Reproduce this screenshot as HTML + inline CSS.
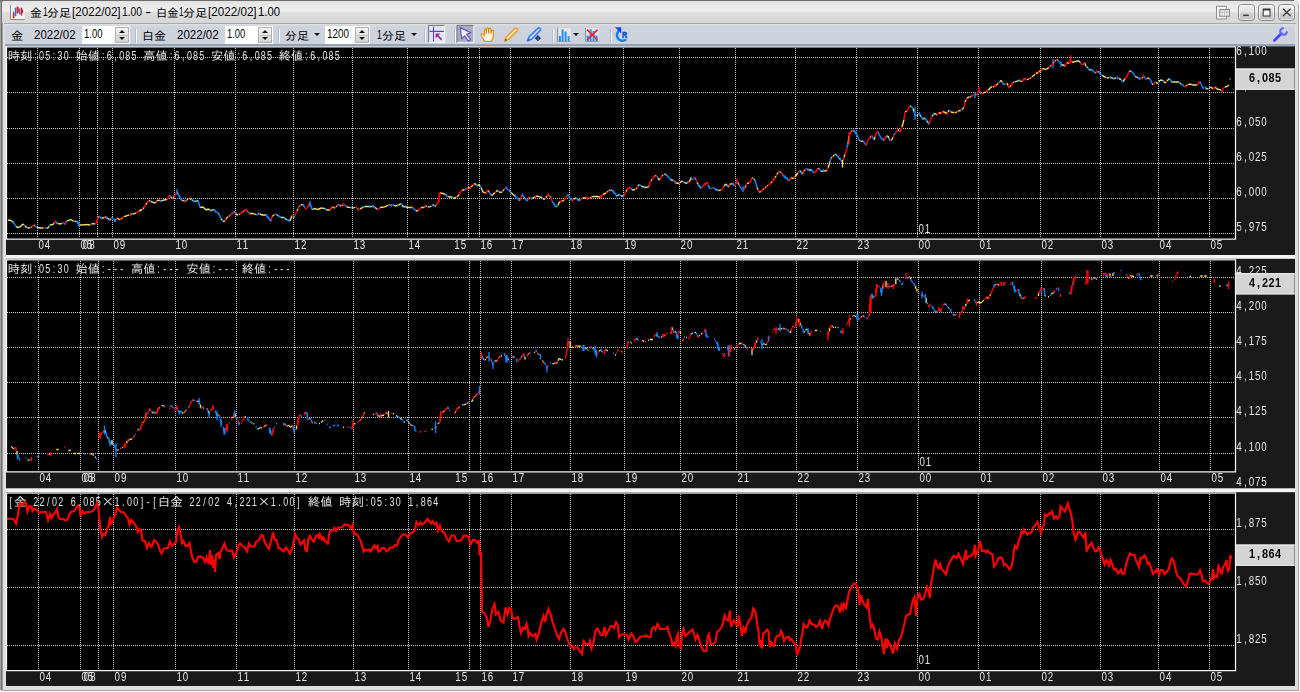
<!DOCTYPE html>
<html lang="ja">
<head>
<meta charset="utf-8">
<title>金1分足[2022/02]1.00 - 白金1分足[2022/02]1.00</title>
<style>
html,body{margin:0;padding:0;background:#fff;overflow:hidden}
body{width:1300px;height:692px;position:relative;font-family:"Liberation Sans","IPAGothic","Noto Sans CJK JP",sans-serif;font-size:11.6px;color:#000}
.abs{position:absolute}
#win{left:0;top:0;width:1299px;height:691px;background:#dedede;border-radius:3px 4px 0 0}
#edgeL{left:0;top:0;width:3px;height:690px;background:linear-gradient(90deg,#a0a0a0 0,#a0a0a0 1.1px,#707070 1.3px,#707070 2.1px,#c8c8c8 2.9px,#d6d6d6 3px)}
#edgeT{left:0;top:0;width:1294px;height:1px;background:#6c6c6c}
#edgeR{left:1298px;top:4px;width:1px;height:687px;background:#a6a6a6}
#edgeB{left:2px;top:690px;width:1297px;height:1px;background:#a6a6a6}
#title{left:2px;top:1px;width:1296px;height:22px;background:linear-gradient(180deg,#e2e2e2 0,#efefef 45%,#dcdcdc 55%,#d6d6d6 100%);border-radius:2px 3px 0 0}
#tline{left:4px;top:22.6px;width:1292px;height:1.9px;background:#a9a9a9}
#tbar{left:5px;top:24.5px;width:1290px;height:19.2px;background:linear-gradient(180deg,#d6dae3 0,#cdd2dc 2px,#cdd2dc 100%)}
#tbar2{left:5px;top:43.6px;width:1290px;height:2.8px;background:#95a1b6}
.t{position:absolute;white-space:pre;line-height:14px;height:14px;transform-origin:0 50%}
.cj{font-family:"IPAGothic","Noto Sans CJK JP",sans-serif}
.inp{position:absolute;background:#fff;height:17.5px;top:26px}
.spin{position:absolute;top:27px;width:13.5px;height:15.5px;background:linear-gradient(180deg,#f4f4f4,#d4d4d4);border:0.5px solid #b0b0b0;box-sizing:border-box}
.spin:before{content:"";position:absolute;left:3px;top:2.2px;border:3.6px solid transparent;border-top:0;border-bottom:3.8px solid #111}
.spin:after{content:"";position:absolute;left:3px;bottom:2px;border:3.6px solid transparent;border-bottom:0;border-top:3.8px solid #111}
.spin i{position:absolute;left:0;right:0;top:7px;height:1px;background:#c0c0c0}
.sep{position:absolute;top:29px;width:1.2px;height:14px;background:#f6f7fa;border-left:1px solid #b4bac6}
.dd{position:absolute;top:33px;border:3.4px solid transparent;border-bottom:0;border-top:3.6px solid #111}
.wb{position:absolute;top:3.5px;width:17px;height:17.6px;border:1px solid #8a8a8a;border-radius:3.5px;box-sizing:border-box;background:linear-gradient(180deg,#f0f0f0 0,#e0e0e0 48%,#cfcfcf 52%,#c2c2c2 100%);box-shadow:inset 0 0 0 1px rgba(255,255,255,.55)}
</style>
</head>
<body>
<div id="win" class="abs"></div>
<div id="edgeL" class="abs"></div>
<div id="edgeT" class="abs"></div>
<div id="edgeR" class="abs"></div>
<div id="edgeB" class="abs"></div>
<div id="title" class="abs"></div>
<div id="tline" class="abs"></div>
<div id="tbar" class="abs"></div>
<div id="tbar2" class="abs"></div>
<svg class="abs" style="left:9px;top:4px" width="17" height="17" viewBox="9 4 17 17">
<rect x="10.5" y="5.5" width="14" height="14" fill="#f1f1f1"/>
<path d="M10.5 5.2V19.5H24.6" stroke="#8c8c8c" stroke-width="1" fill="none"/>
<path d="M13.6 12.5V18" stroke="#ff1010" stroke-width="1.6"/>
<path d="M13.6 11.2V18.6" stroke="#ff1010" stroke-width=".7"/>
<path d="M15.6 7.6V16.2" stroke="#0a7be8" stroke-width="1.5"/>
<path d="M17.4 6.4V13.6M18 7.6V12.6" stroke="#ff1010" stroke-width="1.5"/>
<path d="M19.8 8.6V14.6" stroke="#0a7be8" stroke-width="1.5"/>
<path d="M21.6 7.4V15.6M22.4 9.6V13" stroke="#ff1010" stroke-width="1.4"/>
</svg>
<span class="t cj" style="left:29.80px;top:6.19px;font-size:11.6px;transform:scaleX(1.0264)">金</span>
<span class="t" style="left:42.80px;top:5.42px;font-size:12px;transform:scaleX(0.7178)">1</span>
<span class="t cj" style="left:47.10px;top:6.19px;font-size:11.6px;transform:scaleX(1.0437)">分足</span>
<span class="t" style="left:72.00px;top:5.42px;font-size:12px;transform:scaleX(0.9711)">[2022/02]</span>
<span class="t" style="left:121.80px;top:5.42px;font-size:12px;transform:scaleX(0.8562)">1.00</span>
<span class="t" style="left:145.10px;top:5.42px;font-size:12px;transform:scaleX(1.5500)">-</span>
<span class="t cj" style="left:155.50px;top:6.19px;font-size:11.6px;transform:scaleX(0.9747)">白金</span>
<span class="t" style="left:179.00px;top:5.42px;font-size:12px;transform:scaleX(0.6879)">1</span>
<span class="t cj" style="left:183.20px;top:6.19px;font-size:11.6px;transform:scaleX(1.0480)">分足</span>
<span class="t" style="left:208.20px;top:5.42px;font-size:12px;transform:scaleX(0.9711)">[2022/02]</span>
<span class="t" style="left:257.80px;top:5.42px;font-size:12px;transform:scaleX(0.9418)">1.00</span>
<svg class="abs" style="left:1215px;top:5px" width="16" height="16" viewBox="1215 5 16 16">
<rect x="1216.5" y="6.3" width="9.8" height="12.6" fill="#f6f6f6" stroke="#8e8e8e" stroke-width="1"/>
<rect x="1219.8" y="9.6" width="9.6" height="6.6" fill="#fbfbfb" stroke="#7c7c7c" stroke-width="1"/>
<path d="M1222.2 10V16M1224.6 10V16M1227 10V16M1220 12.4H1229.4" stroke="#b4b4b4" stroke-width=".8"/>
</svg>
<div class="wb" style="left:1238.3px"></div><div class="wb" style="left:1258px"></div><div class="wb" style="left:1278px"></div>
<svg class="abs" style="left:1238px;top:3px" width="60" height="19" viewBox="1238 3 60 19">
<path d="M1243.2 15.3H1248.8" stroke="#3c3c3c" stroke-width="1.5"/>
<rect x="1263.2" y="9.2" width="6.8" height="6.8" fill="#f4f4f4" stroke="#3c3c3c" stroke-width="1.1"/>
<path d="M1263 9.6H1270.2" stroke="#3c3c3c" stroke-width="1.8"/>
<path d="M1283 8.8L1290.6 16M1290.6 8.8L1283 16" stroke="#3c3c3c" stroke-width="1.3"/>
</svg>
<div class="inp" style="left:324.8px;width:45.0px"></div><div class="spin" style="left:355px"><i></i></div>
<div class="inp" style="left:224.6px;width:48.2px"></div><div class="spin" style="left:258px"><i></i></div>
<div class="inp" style="left:82px;width:47.6px"></div><div class="spin" style="left:115px"><i></i></div>
<span class="t cj" style="left:11.10px;top:29.19px;font-size:11.6px;transform:scaleX(1.0609)">金</span>
<span class="t" style="left:34.00px;top:28.37px;font-size:12.4px;transform:scaleX(0.9286)">2022/02</span>
<span class="t" style="left:84.40px;top:27.22px;font-size:12px;transform:scaleX(0.7877)">1.00</span>
<span class="t cj" style="left:142.30px;top:29.19px;font-size:11.6px;transform:scaleX(1.0350)">白金</span>
<span class="t" style="left:176.90px;top:28.37px;font-size:12.4px;transform:scaleX(0.9309)">2022/02</span>
<span class="t" style="left:227.40px;top:27.22px;font-size:12px;transform:scaleX(0.7791)">1.00</span>
<span class="t cj" style="left:284.70px;top:29.19px;font-size:11.6px;transform:scaleX(1.0350)">分足</span>
<span class="t" style="left:327.40px;top:27.22px;font-size:12px;transform:scaleX(0.8239)">1200</span>
<span class="t" style="left:377.00px;top:28.37px;font-size:12.4px;transform:scaleX(0.6950)">1</span>
<span class="t cj" style="left:381.50px;top:29.19px;font-size:11.6px;transform:scaleX(1.0350)">分足</span>
<div class="sep" style="left:135px"></div>
<div class="sep" style="left:277.5px"></div>
<div class="sep" style="left:424.3px"></div>
<div class="sep" style="left:453.7px"></div>
<div class="sep" style="left:551.8px"></div>
<div class="sep" style="left:609.8px"></div>
<div class="dd" style="left:314px"></div>
<div class="dd" style="left:411.2px"></div>
<div class="dd" style="left:573.1px"></div>
<svg class="abs" style="left:426px;top:24px" width="210" height="20" viewBox="426 24 210 20">
<!-- crosshair toggle (pressed) -->
<rect x="428.6" y="25.4" width="16.2" height="17.2" fill="#e3e5ea"/>
<path d="M428.6 42.6V25.4H444.8" stroke="#6f737c" stroke-width="1" fill="none"/>
<path d="M444.8 25.4V42.6H428.6" stroke="#fbfbfd" stroke-width="1" fill="none"/>
<path d="M433.5 26.6V41.6M429.6 31.4H443.8" stroke="#5b45c4" stroke-width="1.1"/>
<path d="M441.6 39.6L437 35" stroke="#9420b4" stroke-width="1.7"/>
<path d="M435.6 33.6H440.2L435.6 38.2Z" fill="#9420b4"/>
<!-- pointer (pressed) -->
<rect x="457" y="25.4" width="16.8" height="17.2" fill="#a9afba"/>
<path d="M457 42.6V25.4H473.8" stroke="#70757f" stroke-width="1" fill="none"/>
<path d="M473.8 25.4V42.6H457" stroke="#f4f5f8" stroke-width="1" fill="none"/>
<path d="M460.2 27.6L470.8 32.6L466.6 34.2L470.6 39.6L468.4 41.2L464.6 35.8L461.8 38.8Z" fill="#f6f2ff" stroke="#6a50d0" stroke-width="1.2" stroke-linejoin="round"/>
<!-- hand -->
<path d="M484.6 41.4L482 36.8C481 35.2 480.8 34 481.6 33.6C482.6 33.2 483.6 34.4 484.6 35.8L484.4 30.2C484.4 28.8 486 28.8 486.1 30.2L486.3 33.5L486.6 28.6C486.7 27.2 488.4 27.2 488.5 28.6L488.6 33.2L489.2 29C489.4 27.8 491 28 491 29.4L490.9 33.6L491.8 31C492.2 29.9 493.6 30.3 493.5 31.6L493.2 36.4C493 38.6 492 40 491.4 41.4Z" fill="#fff5e2" stroke="#d98f1e" stroke-width="1.15" stroke-linejoin="round"/>
<!-- pencil -->
<path d="M504.6 41.2L506.2 37L514.8 28.6C516 27.4 518.4 29 517.4 30.6L508.6 39.4Z" fill="#fde6bc" stroke="#eea030" stroke-width="1.5" stroke-linejoin="round"/>
<path d="M504.4 41.4L505.6 38.2L507.4 40Z" fill="#8a5a20"/>
<!-- marker -->
<path d="M527.4 41L529 36.8L537.8 28.4C539 27.2 541.4 28.8 540.4 30.4L531.6 39.2Z" fill="#c4dcff" stroke="#3f7fe8" stroke-width="1.6" stroke-linejoin="round"/>
<path d="M527.2 41.2L528.4 38.2L530.2 39.8Z" fill="#2a5fc8"/>
<path d="M537.9 35.1L541 38.2L537.9 41.3L534.8 38.2Z" fill="#122f78"/>
<path d="M537.3 36.4V40M538.6 36.4V40" stroke="#6a86c8" stroke-width=".5"/>
<!-- bars -->
<rect x="557.4" y="28" width="13.4" height="13.6" fill="#e6e6e6"/>
<path d="M557.6 28V41.4H570.8" stroke="#8f8f8f" stroke-width="1" fill="none"/>
<path d="M559.8 41V36M562.6 41V29.6M565.6 41V31.6M568.6 41V36.2" stroke="#1e8fff" stroke-width="2"/>
<!-- bars with X -->
<rect x="585.4" y="28" width="13.4" height="13.6" fill="#e6e6e6"/>
<path d="M585.6 28V41.4H598.8" stroke="#8f8f8f" stroke-width="1" fill="none"/>
<path d="M587.8 41V35.4M590.6 41V29.2M593.6 41V31M596.6 41V35.4" stroke="#1e8fff" stroke-width="2"/>
<path d="M587 29.6L597.6 40M597.6 29.6L587 40" stroke="#ff1a2a" stroke-width="1.5"/>
<!-- reload R -->
<path d="M620.4 30A5.6 5.6 0 1 0 626.2 39.4" stroke="#0f86e2" stroke-width="2.5" fill="none"/>
<path d="M615 27.3H621.2V33.4Z" fill="#0f48fa"/>
<text x="621.9" y="37.5" font-family="'Liberation Sans',sans-serif" font-size="9.8" font-weight="bold" fill="#0c52d8" stroke="#0c52d8" stroke-width=".55" textLength="5.2" lengthAdjust="spacingAndGlyphs">R</text>
</svg>
<svg class="abs" style="left:1271px;top:26px" width="18" height="18" viewBox="1271 26 18 18">
<path d="M1274.4 40.4L1281.4 33.6" stroke="#4848f6" stroke-width="2.8" stroke-linecap="round"/>
<path d="M1286.85 31.97A3.3 3.3 0 1 1 1283.03 28.15" stroke="#6464ff" stroke-width="2" fill="none" stroke-linecap="round"/>
</svg>
<svg width="1300" height="692" viewBox="0 0 1300 692" style="position:absolute;left:0;top:0;will-change:transform" shape-rendering="auto">
<rect x="6" y="46.3" width="1289" height="639.7" fill="#f4f4f4"/>
<rect x="6" y="46.3" width="1289" height="208.7" fill="#1a1a1a"/>
<rect x="6.5" y="46.9" width="1229.0" height="192.1" fill="#000"/>
<line x1="7" y1="57.5" x2="1235" y2="57.5" stroke="#c8c8c8" stroke-width="1" stroke-dasharray="1 1"/>
<line x1="7" y1="92.5" x2="1235" y2="92.5" stroke="#c8c8c8" stroke-width="1" stroke-dasharray="1 1"/>
<line x1="7" y1="128.5" x2="1235" y2="128.5" stroke="#c8c8c8" stroke-width="1" stroke-dasharray="1 1"/>
<line x1="7" y1="163.5" x2="1235" y2="163.5" stroke="#c8c8c8" stroke-width="1" stroke-dasharray="1 1"/>
<line x1="7" y1="198.5" x2="1235" y2="198.5" stroke="#c8c8c8" stroke-width="1" stroke-dasharray="1 1"/>
<line x1="7" y1="233.5" x2="1235" y2="233.5" stroke="#c8c8c8" stroke-width="1" stroke-dasharray="1 1"/>
<line x1="37.5" y1="48" x2="37.5" y2="238" stroke="#c8c8c8" stroke-width="1" stroke-dasharray="1 1"/>
<line x1="79.5" y1="48" x2="79.5" y2="238" stroke="#c8c8c8" stroke-width="1" stroke-dasharray="1 1"/>
<line x1="97.5" y1="48" x2="97.5" y2="238" stroke="#c8c8c8" stroke-width="1" stroke-dasharray="1 1"/>
<line x1="112.5" y1="48" x2="112.5" y2="238" stroke="#c8c8c8" stroke-width="1" stroke-dasharray="1 1"/>
<line x1="174.5" y1="48" x2="174.5" y2="238" stroke="#c8c8c8" stroke-width="1" stroke-dasharray="1 1"/>
<line x1="235.5" y1="48" x2="235.5" y2="238" stroke="#c8c8c8" stroke-width="1" stroke-dasharray="1 1"/>
<line x1="293.5" y1="48" x2="293.5" y2="238" stroke="#c8c8c8" stroke-width="1" stroke-dasharray="1 1"/>
<line x1="352.5" y1="48" x2="352.5" y2="238" stroke="#c8c8c8" stroke-width="1" stroke-dasharray="1 1"/>
<line x1="407.5" y1="48" x2="407.5" y2="238" stroke="#c8c8c8" stroke-width="1" stroke-dasharray="1 1"/>
<line x1="468.5" y1="48" x2="468.5" y2="238" stroke="#c8c8c8" stroke-width="1" stroke-dasharray="1 1"/>
<line x1="479.5" y1="48" x2="479.5" y2="238" stroke="#c8c8c8" stroke-width="1" stroke-dasharray="1 1"/>
<line x1="510.5" y1="48" x2="510.5" y2="238" stroke="#c8c8c8" stroke-width="1" stroke-dasharray="1 1"/>
<line x1="569.5" y1="48" x2="569.5" y2="238" stroke="#c8c8c8" stroke-width="1" stroke-dasharray="1 1"/>
<line x1="623.5" y1="48" x2="623.5" y2="238" stroke="#c8c8c8" stroke-width="1" stroke-dasharray="1 1"/>
<line x1="679.5" y1="48" x2="679.5" y2="238" stroke="#c8c8c8" stroke-width="1" stroke-dasharray="1 1"/>
<line x1="735.5" y1="48" x2="735.5" y2="238" stroke="#c8c8c8" stroke-width="1" stroke-dasharray="1 1"/>
<line x1="795.5" y1="48" x2="795.5" y2="238" stroke="#c8c8c8" stroke-width="1" stroke-dasharray="1 1"/>
<line x1="856.5" y1="48" x2="856.5" y2="238" stroke="#c8c8c8" stroke-width="1" stroke-dasharray="1 1"/>
<line x1="917.5" y1="48" x2="917.5" y2="238" stroke="#c8c8c8" stroke-width="1" stroke-dasharray="1 1"/>
<line x1="978.5" y1="48" x2="978.5" y2="238" stroke="#c8c8c8" stroke-width="1" stroke-dasharray="1 1"/>
<line x1="1040.5" y1="48" x2="1040.5" y2="238" stroke="#c8c8c8" stroke-width="1" stroke-dasharray="1 1"/>
<line x1="1100.5" y1="48" x2="1100.5" y2="238" stroke="#c8c8c8" stroke-width="1" stroke-dasharray="1 1"/>
<line x1="1158.5" y1="48" x2="1158.5" y2="238" stroke="#c8c8c8" stroke-width="1" stroke-dasharray="1 1"/>
<line x1="1209.5" y1="48" x2="1209.5" y2="238" stroke="#c8c8c8" stroke-width="1" stroke-dasharray="1 1"/>
<text x="7.70" y="59.90" fill="#e4e4e4" font-family="'IPAGothic','Noto Sans CJK JP',sans-serif" font-size="11.8" textLength="24.64" lengthAdjust="spacingAndGlyphs">時刻</text>
<text transform="scale(0.68,1)" x="52.09 61.15 70.21 79.26 88.32 97.38" y="59.70" fill="#e4e4e4" text-anchor="middle" font-family="'Liberation Sans',sans-serif" font-size="13.2">:05:30</text>
<text x="75.46" y="59.90" fill="#e4e4e4" font-family="'IPAGothic','Noto Sans CJK JP',sans-serif" font-size="11.8" textLength="24.64" lengthAdjust="spacingAndGlyphs">始値</text>
<text transform="scale(0.68,1)" x="151.74 160.79 169.85 178.91 187.97 197.03" y="59.70" fill="#e4e4e4" text-anchor="middle" font-family="'Liberation Sans',sans-serif" font-size="13.2">:6,085</text>
<text x="143.22" y="59.90" fill="#e4e4e4" font-family="'IPAGothic','Noto Sans CJK JP',sans-serif" font-size="11.8" textLength="24.64" lengthAdjust="spacingAndGlyphs">高値</text>
<text transform="scale(0.68,1)" x="251.38 260.44 269.50 278.56 287.62 296.68" y="59.70" fill="#e4e4e4" text-anchor="middle" font-family="'Liberation Sans',sans-serif" font-size="13.2">:6,085</text>
<text x="210.98" y="59.90" fill="#e4e4e4" font-family="'IPAGothic','Noto Sans CJK JP',sans-serif" font-size="11.8" textLength="24.64" lengthAdjust="spacingAndGlyphs">安値</text>
<text transform="scale(0.68,1)" x="351.03 360.09 369.15 378.21 387.26 396.32" y="59.70" fill="#e4e4e4" text-anchor="middle" font-family="'Liberation Sans',sans-serif" font-size="13.2">:6,085</text>
<text x="278.74" y="59.90" fill="#e4e4e4" font-family="'IPAGothic','Noto Sans CJK JP',sans-serif" font-size="11.8" textLength="24.64" lengthAdjust="spacingAndGlyphs">終値</text>
<text transform="scale(0.68,1)" x="450.68 459.74 468.79 477.85 486.91 495.97" y="59.70" fill="#e4e4e4" text-anchor="middle" font-family="'Liberation Sans',sans-serif" font-size="13.2">:6,085</text>
<path d="M8.0 220.0L9.0 220.2M9.0 220.2L10.0 220.3M10.0 220.3L11.0 220.5M11.0 220.5L12.0 221.3M12.0 221.3L13.0 222.2M16.0 226.5L17.0 227.0M17.0 227.0L18.0 227.5M18.0 227.5L19.0 227.2M19.0 227.2L20.0 227.0M20.0 227.0L21.0 226.0M21.0 226.0L22.0 225.0M22.0 225.0L23.0 224.0M23.0 224.0L24.0 225.0M25.0 226.0L26.0 227.0M26.0 227.0L27.0 227.5M28.0 228.0L29.0 227.8M29.0 227.8L30.0 227.7M31.0 227.5L32.0 226.7M34.0 225.0L35.0 225.8M37.0 227.5L38.0 227.7M38.0 227.7L39.0 227.8M39.0 227.8L40.0 228.0M40.0 228.0L41.1 228.0M41.1 228.0L42.3 228.0M42.3 228.0L43.4 228.0M46.9 228.0L48.0 228.0M48.0 228.0L49.0 226.5M50.0 225.0L51.0 224.8M51.0 224.8L52.0 224.7M52.0 224.7L53.0 224.5M53.0 224.5L54.0 223.0M58.0 223.5L59.0 223.7M59.0 223.7L60.0 223.8M60.0 223.8L61.0 224.0M61.0 224.0L62.0 223.2M67.0 221.0L68.0 220.6M68.0 220.6L69.0 220.2M69.0 220.2L70.0 219.9M70.0 219.9L71.0 219.5M71.0 219.5L72.0 220.2M72.0 220.2L73.0 221.0M73.0 221.0L74.0 221.1M75.0 221.2L76.0 221.4M76.0 221.4L77.0 221.5M79.0 225.0L80.0 225.0M80.0 225.0L81.0 225.0M81.0 225.0L82.0 225.0M82.0 225.0L83.0 224.9M83.0 224.9L84.0 224.8M84.0 224.8L85.0 224.7M85.0 224.7L86.0 224.6M86.0 224.6L87.0 224.5M87.0 224.5L88.0 224.7M88.0 224.7L89.0 224.8M89.0 224.8L90.0 225.0M92.0 223.5L93.0 223.7M93.0 223.7L94.0 223.8M94.0 223.8L95.0 224.0M98.0 217.5L99.0 217.0M102.0 218.5L103.0 218.0M103.0 218.0L104.0 217.5M105.0 217.0L106.0 217.5M107.0 218.0L108.0 218.7M108.0 218.7L109.0 219.3M110.0 220.0L111.0 218.8M117.0 218.0L118.0 218.7M118.0 218.7L119.0 219.3M119.0 219.3L120.0 220.0M121.0 219.0L122.0 218.0M124.0 216.7L125.0 216.3M125.0 216.3L126.0 216.0M126.0 216.0L127.0 215.7M127.0 215.7L128.0 215.3M128.0 215.3L129.0 215.0M131.0 214.3L132.0 214.0M133.0 213.8L134.0 213.7M134.0 213.7L135.0 213.5M135.0 213.5L136.0 212.8M139.0 211.0L140.0 210.5M140.0 210.5L141.0 210.0M141.0 210.0L142.0 209.5M143.0 209.0L144.0 207.5M146.0 204.5L147.0 203.0M149.0 200.5L150.0 201.0M151.0 201.5L152.0 202.0M152.0 202.0L153.0 202.3M153.0 202.3L154.0 202.7M154.0 202.7L155.0 203.0M155.0 203.0L156.0 202.0M157.0 201.0L158.0 200.0M158.0 200.0L159.0 200.3M159.0 200.3L160.0 200.7M161.0 201.0L162.0 200.7M162.0 200.7L163.0 200.3M163.0 200.3L164.0 200.0M164.0 200.0L165.0 199.8M165.0 199.8L166.0 199.7M166.0 199.7L167.0 199.5M171.0 196.8L172.0 198.5M173.0 197.5L174.0 196.5M177.0 191.5L178.0 193.8M182.0 200.5L183.0 200.6M183.0 200.6L184.0 200.8M185.0 200.9L186.0 201.0M187.0 200.0L188.0 199.0M189.0 198.0L190.0 198.7M190.0 198.7L191.0 199.3M192.0 200.0L193.0 200.5M195.0 201.5L196.0 201.2M196.0 201.2L197.0 200.8M197.0 200.8L198.0 200.5M200.0 207.5L201.0 207.3M201.0 207.3L202.0 207.2M202.0 207.2L203.0 207.0M203.0 207.0L204.0 208.0M204.0 208.0L205.0 209.0M205.0 209.0L206.0 210.0M206.0 210.0L207.0 209.5M207.0 209.5L208.0 209.0M208.0 209.0L209.0 209.5M209.0 209.5L210.0 210.0M211.0 210.5L212.0 210.2M212.0 210.2L213.0 209.8M213.0 209.8L214.0 209.5M218.0 213.2L219.0 214.0M221.0 218.5L222.0 220.0M223.0 221.5L224.0 221.2M224.0 221.2L225.0 221.0M226.0 219.2L227.0 217.5M227.0 217.5L228.0 216.8M229.0 216.2L230.0 215.5M234.0 212.2L235.0 212.0M236.0 213.5L237.0 215.0M237.0 215.0L238.0 214.7M239.0 214.3L240.0 214.0M243.0 211.5L244.0 210.8M250.0 213.5L251.0 213.5M251.0 213.5L252.0 213.5M252.0 213.5L253.0 213.5M253.0 213.5L254.0 213.9M254.0 213.9L255.0 214.2M255.0 214.2L256.0 214.6M258.0 214.2L259.0 213.5M260.0 214.0L261.0 214.5M261.0 214.5L262.0 215.0M262.0 215.0L263.0 215.0M263.0 215.0L264.0 215.0M264.0 215.0L265.0 215.0M265.0 215.0L266.0 215.0M272.0 216.5L273.0 215.7M273.0 215.7L274.0 214.8M277.0 215.0L278.0 215.5M281.0 217.5L282.0 217.5M282.0 217.5L283.0 217.5M283.0 217.5L284.0 217.5M285.0 218.3L286.0 219.2M286.0 219.2L287.0 220.0M288.0 220.3L289.0 220.7M290.0 221.0L291.0 218.2M291.0 218.2L292.0 215.5M293.0 216.5L294.0 217.5M297.0 210.8L298.0 208.7M299.0 206.5L300.0 205.8M301.0 205.0L302.0 204.8M302.0 204.8L303.0 204.5M309.0 204.5L310.0 203.0M312.0 209.5L313.0 209.2M313.0 209.2L314.0 208.8M314.0 208.8L315.0 208.5M315.0 208.5L316.0 208.8M316.0 208.8L317.0 209.2M317.0 209.2L318.0 209.5M318.0 209.5L319.0 209.0M319.0 209.0L320.0 208.5M320.0 208.5L321.0 208.0M321.0 208.0L322.0 208.1M322.0 208.1L323.0 208.2M323.0 208.2L324.0 208.4M324.0 208.4L325.0 208.5M326.0 209.2L327.0 210.0M327.0 210.0L328.0 210.0M328.0 210.0L329.0 210.0M329.0 210.0L330.0 210.0M332.0 207.0L333.0 207.3M333.0 207.3L334.0 207.7M334.0 207.7L335.0 208.0M336.0 206.8L337.0 205.7M340.0 205.5L341.0 206.0M342.0 205.5L343.0 205.0M347.0 207.0L348.2 207.2M348.2 207.2L349.4 207.4M349.4 207.4L350.6 207.6M351.8 207.8L353.0 208.0M353.0 208.0L354.0 207.7M354.0 207.7L355.0 207.3M360.0 208.8L361.0 208.5M361.0 208.5L362.0 207.8M362.0 207.8L363.0 207.2M365.0 206.5L366.0 206.5M366.0 206.5L367.0 206.5M367.0 206.5L368.0 206.5M368.0 206.5L369.0 206.5M370.0 206.5L371.0 206.5M371.0 206.5L372.0 206.5M373.0 206.5L374.0 206.5M375.0 207.4L376.0 208.2M376.0 208.2L377.0 209.1M380.0 207.5L381.0 207.4M381.0 207.4L382.0 207.2M382.0 207.2L383.0 207.1M383.0 207.1L384.0 207.0M384.0 207.0L385.0 206.7M385.0 206.7L386.0 206.3M386.0 206.3L387.0 206.0M387.0 206.0L388.0 205.2M389.0 204.5L390.0 205.2M394.0 205.2L395.0 206.0M395.0 206.0L396.0 205.8M396.0 205.8L397.0 205.7M398.0 205.5L399.0 204.8M399.0 204.8L400.0 204.2M400.0 204.2L401.0 203.5M402.0 205.0L403.0 206.5M403.0 206.5L404.0 206.7M404.0 206.7L405.0 206.8M406.0 207.0L407.0 207.2M407.0 207.2L408.0 207.3M408.0 207.3L409.0 207.5M409.0 207.5L410.0 207.5M410.0 207.5L411.0 207.5M411.0 207.5L412.0 207.5M416.0 210.5L417.0 211.0M417.0 211.0L418.0 210.5M421.0 207.5L422.0 207.5M422.0 207.5L423.0 207.5M423.0 207.5L424.0 207.5M426.0 206.0L427.0 206.3M428.0 206.7L429.0 207.0M429.0 207.0L430.0 206.7M430.0 206.7L431.0 206.3M433.0 204.5L434.0 205.5M435.0 206.5L436.0 205.2M440.0 193.0L441.0 193.2M441.0 193.2L442.0 193.3M442.0 193.3L443.0 193.5M443.0 193.5L444.0 194.0M444.0 194.0L445.0 194.5M448.0 196.3L449.0 197.0M449.0 197.0L450.0 197.0M450.0 197.0L451.0 197.0M451.0 197.0L452.0 197.0M453.0 197.8L454.0 198.5M454.0 198.5L455.0 198.0M455.0 198.0L456.0 197.5M457.0 196.8L458.0 196.0M458.0 196.0L459.0 194.5M462.0 190.0L463.0 190.0M463.0 190.0L464.0 190.0M468.0 187.5L469.0 187.8M469.0 187.8L470.0 188.0M471.0 187.0L472.0 186.0M472.0 186.0L473.0 185.2M474.0 184.3L475.0 183.5M475.0 183.5L476.0 184.8M477.0 186.0L478.0 185.2M478.0 185.2L479.0 184.5M479.0 184.5L480.0 186.0M481.0 187.5L482.0 189.8M482.0 189.8L483.0 192.0M483.0 192.0L484.0 192.3M484.0 192.3L485.0 192.7M485.0 192.7L486.0 193.0M488.0 190.0L489.0 192.0M491.0 194.8L492.0 195.5M492.0 195.5L493.0 194.5M493.0 194.5L494.0 193.5M494.0 193.5L495.0 192.5M496.0 191.5L497.0 191.0M497.0 191.0L498.0 190.5M499.0 191.5L500.0 192.5M500.0 192.5L501.0 192.2M501.0 192.2L502.0 192.0M503.0 190.8L504.0 189.5M511.0 192.5L512.0 193.5M512.0 193.5L513.0 194.5M513.0 194.5L514.0 195.3M514.0 195.3L515.0 196.2M519.0 199.8L520.0 200.5M524.0 197.5L525.0 198.5M529.0 198.0L530.0 198.2M532.0 198.2L533.0 197.8M533.0 197.8L534.0 197.5M534.0 197.5L535.0 197.0M536.0 196.5L537.0 196.0M537.0 196.0L538.0 196.3M538.0 196.3L539.0 196.7M539.0 196.7L540.0 197.0M540.0 197.0L541.0 197.2M541.0 197.2L542.0 197.5M543.0 198.5L544.0 199.5M544.0 199.5L545.0 198.5M546.0 197.5L547.0 196.0M550.0 196.5L551.0 197.5M556.0 207.0L557.0 206.2M558.0 205.5L559.0 202.5M559.0 202.5L560.0 202.0M562.0 201.0L563.0 200.8M563.0 200.8L564.0 200.5M574.0 199.0L575.0 198.5M575.0 198.5L576.0 198.0M578.0 199.5L579.0 200.0M583.0 198.0L584.0 198.0M584.0 198.0L585.0 198.0M585.0 198.0L586.0 198.0M588.0 198.3L589.0 198.5M590.0 198.0L591.0 197.5M592.0 197.0L593.0 196.5M593.0 196.5L594.0 196.5M594.0 196.5L595.0 196.5M595.0 196.5L596.0 196.5M596.0 196.5L597.0 196.5M597.0 196.5L598.0 196.7M598.0 196.7L599.0 196.8M599.0 196.8L600.0 197.0M603.0 194.5L604.0 194.0M604.0 194.0L605.0 193.5M605.0 193.5L606.0 193.0M607.0 192.2L608.0 191.3M609.0 190.5L610.0 190.3M611.0 190.2L612.0 190.0M617.0 196.0L618.0 195.2M618.0 195.2L619.0 194.5M621.0 196.0L622.0 196.0M622.0 196.0L623.0 196.0M626.0 191.5L627.0 190.0M632.0 190.0L633.0 189.8M633.0 189.8L634.0 189.7M634.0 189.7L635.0 189.5M636.0 188.8L637.0 188.0M638.0 186.2L639.0 184.5M641.0 185.8L642.0 186.5M642.0 186.5L643.0 186.8M643.0 186.8L644.0 187.0M645.0 187.2L646.0 187.5M646.0 187.5L647.0 187.2M647.0 187.2L648.0 186.8M648.0 186.8L649.0 186.5M651.0 180.8L652.0 179.5M655.0 175.5L656.0 175.8M658.0 178.0L659.0 180.0M659.0 180.0L660.0 178.7M662.0 176.0L663.0 175.3M664.0 174.7L665.0 174.0M666.0 174.8L667.0 175.5M671.0 179.5L672.0 180.0M672.0 180.0L673.0 180.5M676.0 183.0L677.0 183.2M677.0 183.2L678.0 183.3M678.0 183.3L679.0 183.5M680.0 182.7L681.0 181.8M681.0 181.8L682.0 181.0M682.0 181.0L683.0 181.7M684.0 182.3L685.0 183.0M685.0 183.0L686.0 183.0M686.0 183.0L687.0 183.0M689.0 181.8L690.0 180.5M690.0 180.5L691.0 177.5M697.0 182.5L698.0 184.2M699.0 186.0L700.0 186.7M716.0 189.5L717.0 189.8M718.0 190.2L719.0 190.5M719.0 190.5L720.0 190.2M720.0 190.2L721.0 189.8M724.0 186.0L725.0 185.0M725.0 185.0L726.0 184.0M726.0 184.0L727.0 185.5M728.0 187.0L729.0 185.8M730.0 184.5L731.0 184.0M731.0 184.0L732.0 183.5M738.0 182.7L739.0 184.8M745.0 187.5L746.0 185.5M747.0 183.5L748.0 183.2M748.0 183.2L749.0 183.0M752.0 177.5L753.0 178.3M754.0 179.2L755.0 180.0M757.0 187.5L758.0 189.8M759.0 192.0L760.0 191.8M760.0 191.8L761.0 191.5M763.0 189.5L764.0 188.5M765.0 187.7L766.0 186.8M767.0 186.0L768.0 185.3M771.0 182.8L772.0 181.7M775.0 177.5L776.0 176.0M777.0 174.3L778.0 172.7M780.0 171.8L781.0 172.7M791.0 178.0L792.0 178.2M792.0 178.2L793.0 178.3M793.0 178.3L794.0 178.5M795.0 177.0L796.0 175.5M796.0 175.5L797.0 174.0M797.0 174.0L798.0 172.8M800.0 170.5L801.0 172.2M802.0 174.0L803.0 172.5M804.0 171.0L805.0 169.8M809.0 170.5L810.0 170.0M810.0 170.0L811.0 169.5M818.0 169.0L819.0 168.0M821.0 171.5L822.0 171.3M822.0 171.3L823.0 171.2M824.0 171.0L825.0 170.8M825.0 170.8L826.0 170.7M826.0 170.7L827.0 170.5M828.0 167.8L829.0 165.0M829.0 165.0L830.0 161.5M831.0 158.0L832.0 157.2M833.0 156.5L834.0 155.2M835.0 154.0L836.0 154.8M836.0 154.8L837.0 155.5M839.0 158.5L840.0 159.2M844.0 157.0L845.0 154.5M848.0 144.0L849.0 136.0M851.0 131.5L852.0 130.8M859.0 140.0L860.0 140.8M861.0 141.5L862.0 141.2M862.0 141.2L863.0 141.0M870.0 137.5L871.0 136.5M874.0 140.0L875.0 136.8M883.0 139.5L884.0 140.0M887.0 136.5L888.0 136.0M888.0 136.0L889.0 138.5M891.0 140.2L892.0 139.5M892.0 139.5L893.0 137.2M898.0 129.5L899.0 130.8M902.0 127.0L903.0 123.2M903.0 123.2L904.0 119.5M905.0 111.5L906.0 111.5M906.0 111.5L907.0 111.5M910.0 106.5L911.0 106.0M913.0 108.5L914.0 111.8M915.0 115.0L916.0 115.5M917.0 116.0L918.0 114.5M920.0 114.8L921.0 116.5M923.0 119.0L924.0 118.5M924.0 118.5L925.0 118.0M927.0 121.0L928.0 122.5M932.0 116.5L933.0 114.5M934.0 114.0L935.0 113.5M935.0 113.5L936.0 114.2M936.0 114.2L937.0 115.0M939.0 112.5L940.0 113.0M940.0 113.0L941.0 113.5M943.0 111.5L944.0 112.0M944.0 112.0L945.0 112.5M945.0 112.5L946.0 113.0M946.0 113.0L947.0 113.5M948.0 111.8L949.0 110.0M951.0 112.0L952.0 112.2M952.0 112.2L953.0 112.5M953.0 112.5L954.0 112.5M955.0 112.5L956.0 112.5M956.0 112.5L957.0 111.8M958.0 111.0L959.0 110.8M959.0 110.8L960.0 110.5M962.0 109.5L963.0 108.5M963.0 108.5L964.0 107.5M965.0 102.0L966.0 100.0M967.0 98.0L968.0 97.5M968.0 97.5L969.0 97.0M970.0 96.8L971.0 96.5M975.0 94.0L976.0 94.5M983.0 93.0L984.0 92.7M984.0 92.7L985.0 92.3M985.0 92.3L986.0 92.0M988.0 90.3L989.0 89.5M989.0 89.5L990.0 88.2M990.0 88.2L991.0 87.0M991.0 87.0L992.0 86.8M993.0 86.7L994.0 86.5M996.0 85.2L997.0 84.5M997.0 84.5L998.0 83.5M1000.0 81.5L1001.0 80.5M1001.0 80.5L1002.0 82.0M1007.0 83.0L1008.0 85.5M1010.0 86.8L1011.0 85.5M1013.0 82.5L1014.0 82.2M1015.0 81.8L1016.0 81.5M1016.0 81.5L1017.0 81.2M1017.0 81.2L1018.0 80.8M1018.0 80.8L1019.0 80.5M1020.0 80.8L1021.0 81.2M1021.0 81.2L1022.0 81.5M1027.0 79.5L1028.0 79.2M1028.0 79.2L1029.0 78.8M1030.0 78.5L1031.0 77.7M1032.0 76.8L1033.0 76.0M1033.0 76.0L1034.0 75.2M1034.0 75.2L1035.0 74.3M1036.0 73.5L1037.0 73.0M1037.0 73.0L1038.0 72.5M1039.0 72.0L1040.0 71.0M1040.0 71.0L1041.0 70.2M1042.0 69.3L1043.0 68.5M1043.0 68.5L1044.0 68.8M1044.0 68.8L1045.0 69.2M1045.0 69.2L1046.0 69.5M1046.0 69.5L1047.0 68.8M1047.0 68.8L1048.0 68.2M1048.0 68.2L1049.0 67.5M1050.0 66.5L1051.0 65.5M1053.0 63.5L1054.0 62.2M1055.0 61.0L1056.0 60.2M1057.0 59.5L1058.0 60.5M1061.0 64.5L1062.0 64.8M1062.0 64.8L1063.0 65.0M1063.0 65.0L1064.0 65.5M1064.0 65.5L1065.0 66.0M1067.0 62.5L1068.0 63.0M1068.0 63.0L1069.0 63.5M1072.0 62.0L1073.0 62.0M1073.0 62.0L1074.0 62.0M1074.0 62.0L1075.0 61.7M1075.0 61.7L1076.0 61.3M1076.0 61.3L1077.0 61.0M1077.0 61.0L1078.0 61.0M1078.0 61.0L1079.0 61.0M1079.0 61.0L1080.0 62.2M1084.5 62.5L1086.0 66.0M1087.0 67.0L1088.0 68.0M1089.0 70.0L1090.0 69.8M1090.0 69.8L1091.0 69.5M1095.0 73.0L1096.0 72.2M1098.0 71.8L1099.0 72.0M1102.0 75.2L1103.0 76.0M1103.0 76.0L1104.0 76.5M1104.0 76.5L1105.0 77.0M1105.0 77.0L1106.0 77.3M1107.0 77.7L1108.0 78.0M1108.0 78.0L1109.0 77.5M1111.0 77.5L1112.0 78.0M1112.0 78.0L1113.0 78.2M1114.0 78.3L1115.0 78.5M1115.0 78.5L1116.0 77.8M1119.0 78.5L1120.0 79.0M1120.0 79.0L1121.0 79.5M1123.0 82.0L1124.0 80.2M1124.0 80.2L1125.0 78.5M1129.0 71.5L1130.0 71.2M1130.0 71.2L1131.0 71.0M1135.0 76.5L1136.0 76.8M1136.0 76.8L1137.0 77.2M1137.0 77.2L1138.0 77.5M1142.0 78.0L1143.0 77.0M1147.0 78.8L1148.0 78.0M1148.0 78.0L1149.0 78.5M1152.0 83.5L1153.5 85.0M1156.0 82.5L1157.0 83.0M1157.0 83.0L1158.0 83.5M1159.0 81.8L1160.0 80.0M1160.0 80.0L1161.0 80.2M1161.0 80.2L1162.0 80.3M1162.0 80.3L1163.0 80.5M1164.0 81.8L1165.0 83.0M1165.0 83.0L1166.0 82.0M1167.0 81.0L1168.2 79.8M1168.2 79.8L1169.5 78.5M1172.0 82.0L1173.0 82.0M1173.0 82.0L1174.0 82.0M1174.0 82.0L1175.0 82.0M1175.0 82.0L1176.0 82.0M1176.0 82.0L1177.0 82.0M1177.0 82.0L1178.0 82.0M1178.0 82.0L1179.0 82.0M1180.0 83.0L1181.0 84.0M1186.0 86.0L1187.0 85.0M1188.0 84.7L1189.0 84.3M1189.0 84.3L1190.0 84.0M1190.0 84.0L1191.0 84.3M1191.0 84.3L1192.0 84.7M1192.0 84.7L1193.0 85.0M1193.0 85.0L1194.0 85.0M1194.0 85.0L1195.0 85.0M1195.0 85.0L1196.0 85.0M1196.0 85.0L1197.0 85.0M1206.0 88.0L1207.0 89.0M1207.0 89.0L1208.0 88.8M1209.0 88.5L1210.0 87.8M1210.0 87.8L1211.0 87.0M1211.0 87.0L1212.0 88.0M1212.0 88.0L1213.0 89.0M1215.0 87.0L1216.0 88.0M1216.0 88.0L1217.0 89.0M1217.0 89.0L1218.0 89.2M1218.0 89.2L1219.0 89.5M1219.0 89.5L1220.0 89.8M1220.0 89.8L1221.0 90.0M1225.0 87.0L1226.0 86.8M1226.0 86.8L1227.0 86.5M1227.0 86.5L1228.0 85.8M1228.0 85.8L1229.0 85.0" stroke="#f0e264" stroke-width="1.4" fill="none" stroke-linecap="butt"/>
<path d="M13.0 222.2L14.0 223.0M14.0 223.0L15.0 224.8M15.0 224.8L16.0 226.5M24.0 225.0L25.0 226.0M27.0 227.5L28.0 228.0M35.0 225.8L36.0 226.7M36.0 226.7L37.0 227.5M44.6 228.0L45.7 228.0M45.7 228.0L46.9 228.0M49.0 226.5L50.0 225.0M56.0 222.2L57.0 222.8M57.0 222.8L58.0 223.5M62.0 223.2L63.0 222.5M64.0 223.2L65.0 224.0M66.0 222.5L67.0 221.0M74.0 221.1L75.0 221.2M77.0 221.5L78.0 223.2M78.0 223.2L79.0 225.0M91.0 224.2L92.0 223.5M100.0 216.5L101.0 217.5M101.0 217.5L102.0 218.5M106.0 217.5L107.0 218.0M109.0 219.3L110.0 220.0M112.0 217.5L113.0 218.5M113.0 218.5L114.0 219.5M114.0 219.5L115.0 220.5M115.0 220.5L116.0 219.2M132.0 214.0L133.0 213.8M150.0 201.0L151.0 201.5M160.0 200.7L161.0 201.0M170.0 195.0L171.0 196.8M178.0 193.8L179.0 196.0M179.0 196.0L180.0 197.5M180.0 197.5L181.0 199.0M181.0 199.0L182.0 200.5M186.0 201.0L187.0 200.0M191.0 199.3L192.0 200.0M193.0 200.5L194.0 201.0M194.0 201.0L195.0 201.5M198.0 200.5L199.0 204.0M199.0 204.0L200.0 207.5M210.0 210.0L211.0 210.5M214.0 209.5L215.0 210.5M215.0 210.5L216.0 211.5M216.0 211.5L217.0 212.3M217.0 212.3L218.0 213.2M219.0 214.0L220.0 216.2M220.0 216.2L221.0 218.5M222.0 220.0L223.0 221.5M231.0 214.5L232.0 213.5M233.0 212.5L234.0 212.2M235.0 212.0L236.0 213.5M247.0 210.8L248.0 212.2M248.0 212.2L249.0 213.5M256.0 214.6L257.0 215.0M257.0 215.0L258.0 214.2M259.0 213.5L260.0 214.0M266.0 215.0L267.0 216.2M267.0 216.2L268.0 217.3M268.0 217.3L269.0 218.5M269.0 218.5L270.0 220.0M270.0 220.0L271.0 221.5M275.0 214.0L276.0 214.5M276.0 214.5L277.0 215.0M278.0 215.5L279.0 216.2M279.0 216.2L280.0 216.8M280.0 216.8L281.0 217.5M284.0 217.5L285.0 218.3M287.0 220.0L288.0 220.3M289.0 220.7L290.0 221.0M294.0 217.5L295.0 215.2M303.0 204.5L304.0 206.2M304.0 206.2L305.0 207.8M310.0 203.0L311.0 206.2M311.0 206.2L312.0 209.5M325.0 208.5L326.0 209.2M338.0 204.5L339.0 205.0M339.0 205.0L340.0 205.5M345.0 205.3L346.0 206.2M346.0 206.2L347.0 207.0M350.6 207.6L351.8 207.8M357.0 208.2L358.0 209.5M363.0 207.2L364.0 206.5M364.0 206.5L365.0 206.5M369.0 206.5L370.0 206.5M372.0 206.5L373.0 206.5M374.0 206.5L375.0 207.4M377.0 209.1L378.0 210.0M390.0 205.2L391.0 206.0M391.0 206.0L392.0 205.2M393.0 204.5L394.0 205.2M397.0 205.7L398.0 205.5M401.0 203.5L402.0 205.0M405.0 206.8L406.0 207.0M413.0 207.5L414.0 208.8M414.0 208.8L415.0 210.0M415.0 210.0L416.0 210.5M424.0 207.5L425.0 206.8M431.0 206.3L432.0 206.0M432.0 206.0L433.0 204.5M434.0 205.5L435.0 206.5M445.0 194.5L446.0 195.0M446.0 195.0L447.0 195.7M452.0 197.0L453.0 197.8M464.0 190.0L465.0 190.0M465.0 190.0L466.0 189.2M476.0 184.8L477.0 186.0M480.0 186.0L481.0 187.5M489.0 192.0L490.0 194.0M490.0 194.0L491.0 194.8M498.0 190.5L499.0 191.5M504.0 189.5L505.0 188.5M506.0 187.5L507.0 188.8M507.0 188.8L508.0 190.0M509.0 190.8L510.0 191.5M510.0 191.5L511.0 192.5M515.0 196.2L516.0 197.0M516.0 197.0L517.0 198.0M517.0 198.0L518.0 199.0M518.0 199.0L519.0 199.8M522.0 194.5L523.0 196.0M523.0 196.0L524.0 197.5M525.0 198.5L526.0 199.5M526.0 199.5L527.0 201.0M527.0 201.0L528.0 199.5M530.0 198.2L531.0 198.5M531.0 198.5L532.0 198.2M542.0 197.5L543.0 198.5M549.0 195.5L550.0 196.5M552.0 201.0L553.0 202.5M553.0 202.5L554.0 204.0M554.0 204.0L555.0 205.5M555.0 205.5L556.0 207.0M557.0 206.2L558.0 205.5M567.0 196.0L568.0 194.5M568.0 194.5L569.0 196.5M569.0 196.5L570.0 198.5M570.0 198.5L571.0 199.5M571.0 199.5L572.0 200.5M576.0 198.0L577.0 198.8M577.0 198.8L578.0 199.5M579.0 200.0L580.0 200.5M582.0 198.0L583.0 198.0M610.0 190.3L611.0 190.2M612.0 190.0L613.0 191.2M613.0 191.2L614.0 192.3M614.0 192.3L615.0 193.5M615.0 193.5L616.0 194.8M616.0 194.8L617.0 196.0M619.0 194.5L620.0 195.2M620.0 195.2L621.0 196.0M623.0 196.0L624.0 196.0M630.0 187.5L631.0 188.8M631.0 188.8L632.0 190.0M639.0 184.5L640.0 185.2M640.0 185.2L641.0 185.8M644.0 187.0L645.0 187.2M657.0 176.0L658.0 178.0M665.0 174.0L666.0 174.8M667.0 175.5L668.0 176.7M668.0 176.7L669.0 177.8M669.0 177.8L670.0 179.0M670.0 179.0L671.0 179.5M673.0 180.5L674.0 181.3M675.0 182.2L676.0 183.0M683.0 181.7L684.0 182.3M687.0 183.0L688.0 183.0M691.0 177.5L692.0 178.8M692.0 178.8L693.0 180.0M695.0 177.5L696.0 180.0M698.0 184.2L699.0 186.0M700.0 186.7L701.0 187.3M701.0 187.3L702.0 188.0M708.0 184.8L709.0 187.5M709.0 187.5L710.0 188.2M710.0 188.2L711.0 189.0M713.0 187.5L714.0 188.2M714.0 188.2L715.0 188.8M715.0 188.8L716.0 189.5M717.0 189.8L718.0 190.2M727.0 185.5L728.0 187.0M732.0 183.5L733.0 184.3M733.0 184.3L734.0 185.2M734.0 185.2L735.0 186.0M737.0 180.5L738.0 182.7M739.0 184.8L740.0 187.0M740.0 187.0L741.0 188.0M741.0 188.0L742.0 189.0M742.0 189.0L743.0 190.0M753.0 178.3L754.0 179.2M755.0 180.0L756.0 183.8M756.0 183.8L757.0 187.5M779.0 171.0L780.0 171.8M781.0 172.7L782.0 173.5M783.0 174.7L784.0 175.8M784.0 175.8L785.0 177.0M785.0 177.0L786.0 177.8M786.0 177.8L787.0 178.7M787.0 178.7L788.0 179.5M788.0 179.5L789.0 181.0M799.0 171.7L800.0 170.5M801.0 172.2L802.0 174.0M806.0 168.5L807.0 169.2M807.0 169.2L808.0 169.8M808.0 169.8L809.0 170.5M811.0 169.5L812.0 170.7M812.0 170.7L813.0 171.8M813.0 171.8L814.0 173.0M819.0 168.0L820.0 169.8M820.0 169.8L821.0 171.5M823.0 171.2L824.0 171.0M830.0 161.5L831.0 158.0M834.0 155.2L835.0 154.0M837.0 155.5L838.0 157.0M838.0 157.0L839.0 158.5M840.0 159.2L841.0 160.0M841.0 160.0L842.5 163.0M847.0 148.0L848.0 144.0M853.0 130.0L854.0 130.8M854.0 130.8L855.0 131.5M855.0 131.5L856.0 133.2M856.0 133.2L857.0 135.0M857.0 135.0L858.0 137.5M858.0 137.5L859.0 140.0M860.0 140.8L861.0 141.5M863.0 141.0L864.0 142.2M864.0 142.2L865.0 143.5M865.0 143.5L866.0 145.5M872.0 135.5L873.0 137.8M873.0 137.8L874.0 140.0M878.0 131.5L879.0 134.0M879.0 134.0L880.0 136.5M880.0 136.5L881.0 137.8M881.0 137.8L882.0 139.0M882.0 139.0L883.0 139.5M886.0 137.0L887.0 136.5M889.0 138.5L890.0 141.0M894.0 135.0L895.0 133.8M899.0 130.8L900.0 132.0M911.0 106.0L912.0 107.2M912.0 107.2L913.0 108.5M914.0 111.8L915.0 115.0M916.0 115.5L917.0 116.0M918.0 114.5L919.0 113.0M919.0 113.0L920.0 114.8M921.0 116.5L922.0 117.8M922.0 117.8L923.0 119.0M925.0 118.0L926.0 119.5M926.0 119.5L927.0 121.0M928.0 122.5L929.0 124.0M933.0 114.5L934.0 114.0M949.0 110.0L950.0 111.0M950.0 111.0L951.0 112.0M960.0 110.5L961.0 110.0M969.0 97.0L970.0 96.8M976.0 94.5L977.0 95.0M979.0 90.0L980.0 92.0M980.0 92.0L981.0 94.0M999.0 82.5L1000.0 81.5M1002.0 82.0L1003.0 83.5M1003.0 83.5L1004.0 84.0M1004.0 84.0L1005.0 84.5M1014.0 82.2L1015.0 81.8M1019.0 80.5L1020.0 80.8M1024.0 78.5L1025.0 78.8M1058.0 60.5L1059.0 61.5M1059.0 61.5L1060.0 63.0M1060.0 63.0L1061.0 64.5M1080.0 62.2L1081.0 63.5M1082.0 64.2L1083.0 65.0M1086.0 66.0L1087.0 67.0M1088.0 68.0L1089.0 70.0M1091.0 69.5L1092.0 70.0M1092.0 70.0L1093.0 70.5M1093.0 70.5L1094.0 71.8M1094.0 71.8L1095.0 73.0M1099.0 72.0L1100.0 73.2M1100.0 73.2L1101.0 74.5M1101.0 74.5L1102.0 75.2M1106.0 77.3L1107.0 77.7M1110.0 77.0L1111.0 77.5M1113.0 78.2L1114.0 78.3M1117.0 77.0L1118.0 77.8M1118.0 77.8L1119.0 78.5M1121.0 79.5L1122.0 80.8M1122.0 80.8L1123.0 82.0M1131.0 71.0L1132.0 71.8M1132.0 71.8L1133.0 72.5M1133.0 72.5L1134.0 74.5M1134.0 74.5L1135.0 76.5M1138.0 77.5L1139.0 78.0M1139.0 78.0L1140.0 78.5M1140.0 78.5L1141.0 79.0M1144.0 76.0L1145.0 77.8M1145.0 77.8L1146.0 79.5M1149.0 78.5L1150.0 79.0M1150.0 79.0L1151.0 81.2M1151.0 81.2L1152.0 83.5M1155.0 82.0L1156.0 82.5M1158.0 83.5L1159.0 81.8M1163.0 80.5L1164.0 81.8M1169.5 78.5L1170.8 80.2M1170.8 80.2L1172.0 82.0M1179.0 82.0L1180.0 83.0M1181.0 84.0L1182.0 85.0M1182.0 85.0L1183.0 85.7M1183.0 85.7L1184.0 86.3M1199.5 82.0L1201.0 83.5M1201.0 83.5L1202.0 86.0M1202.0 86.0L1203.0 88.5M1203.0 88.5L1204.0 87.8M1205.0 87.0L1206.0 88.0M1208.0 88.8L1209.0 88.5M1221.0 90.0L1222.0 92.5" stroke="#0a84ff" stroke-width="1.4" fill="none" stroke-linecap="butt"/>
<path d="M30.0 227.7L31.0 227.5M32.0 226.7L33.0 225.8M33.0 225.8L34.0 225.0M43.4 228.0L44.6 228.0M54.0 223.0L55.0 221.5M55.0 221.5L56.0 222.2M63.0 222.5L64.0 223.2M65.0 224.0L66.0 222.5M90.0 225.0L91.0 224.2M95.0 224.0L96.0 223.0M96.0 223.0L97.0 222.0M97.0 222.0L98.0 217.5M99.0 217.0L100.0 216.5M104.0 217.5L105.0 217.0M111.0 218.8L112.0 217.5M116.0 219.2L117.0 218.0M120.0 220.0L121.0 219.0M122.0 218.0L123.0 217.0M123.0 217.0L124.0 216.7M129.0 215.0L130.0 214.7M130.0 214.7L131.0 214.3M136.0 212.8L137.0 212.2M137.0 212.2L138.0 211.5M138.0 211.5L139.0 211.0M142.0 209.5L143.0 209.0M144.0 207.5L145.0 206.0M145.0 206.0L146.0 204.5M147.0 203.0L148.0 201.8M148.0 201.8L149.0 200.5M156.0 202.0L157.0 201.0M167.0 199.5L168.0 198.0M168.0 198.0L169.0 196.5M169.0 196.5L170.0 195.0M172.0 198.5L173.0 197.5M174.0 196.5L175.0 195.5M175.0 195.5L176.0 193.5M176.0 193.5L177.0 191.5M184.0 200.8L185.0 200.9M188.0 199.0L189.0 198.0M225.0 221.0L226.0 219.2M228.0 216.8L229.0 216.2M230.0 215.5L231.0 214.5M232.0 213.5L233.0 212.5M238.0 214.7L239.0 214.3M240.0 214.0L241.0 213.2M241.0 213.2L242.0 212.3M242.0 212.3L243.0 211.5M244.0 210.8L245.0 210.2M245.0 210.2L246.0 209.5M246.0 209.5L247.0 210.8M249.0 213.5L250.0 213.5M271.0 221.5L272.0 216.5M274.0 214.8L275.0 214.0M292.0 215.5L293.0 216.5M295.0 215.2L296.0 213.0M296.0 213.0L297.0 210.8M298.0 208.7L299.0 206.5M300.0 205.8L301.0 205.0M305.0 207.8L306.0 209.5M306.0 209.5L307.0 207.8M307.0 207.8L308.0 206.0M308.0 206.0L309.0 204.5M330.0 210.0L331.0 208.5M331.0 208.5L332.0 207.0M335.0 208.0L336.0 206.8M337.0 205.7L338.0 204.5M341.0 206.0L342.0 205.5M343.0 205.0L344.0 204.5M344.0 204.5L345.0 205.3M355.0 207.3L356.0 207.0M356.0 207.0L357.0 208.2M358.0 209.5L359.0 209.2M359.0 209.2L360.0 208.8M378.0 210.0L379.0 208.8M379.0 208.8L380.0 207.5M388.0 205.2L389.0 204.5M392.0 205.2L393.0 204.5M412.0 207.5L413.0 207.5M418.0 210.5L419.0 210.0M419.0 210.0L420.0 208.8M420.0 208.8L421.0 207.5M425.0 206.8L426.0 206.0M427.0 206.3L428.0 206.7M436.0 205.2L437.0 204.0M437.0 204.0L438.0 202.0M438.0 202.0L439.0 200.0M439.0 200.0L440.0 193.0M447.0 195.7L448.0 196.3M456.0 197.5L457.0 196.8M459.0 194.5L460.0 193.0M460.0 193.0L461.0 191.5M461.0 191.5L462.0 190.0M466.0 189.2L467.0 188.3M467.0 188.3L468.0 187.5M470.0 188.0L471.0 187.0M473.0 185.2L474.0 184.3M486.0 193.0L487.0 191.5M487.0 191.5L488.0 190.0M495.0 192.5L496.0 191.5M502.0 192.0L503.0 190.8M505.0 188.5L506.0 187.5M508.0 190.0L509.0 190.8M520.0 200.5L521.0 197.5M521.0 197.5L522.0 194.5M528.0 199.5L529.0 198.0M535.0 197.0L536.0 196.5M545.0 198.5L546.0 197.5M547.0 196.0L548.0 194.5M548.0 194.5L549.0 195.5M551.0 197.5L552.0 201.0M560.0 202.0L561.0 201.5M561.0 201.5L562.0 201.0M564.0 200.5L565.0 199.0M565.0 199.0L566.0 197.5M566.0 197.5L567.0 196.0M572.0 200.5L573.0 199.8M573.0 199.8L574.0 199.0M580.0 200.5L581.0 199.2M581.0 199.2L582.0 198.0M586.0 198.0L587.0 198.2M587.0 198.2L588.0 198.3M589.0 198.5L590.0 198.0M591.0 197.5L592.0 197.0M600.0 197.0L601.0 196.2M601.0 196.2L602.0 195.3M602.0 195.3L603.0 194.5M606.0 193.0L607.0 192.2M608.0 191.3L609.0 190.5M624.0 196.0L625.0 193.8M625.0 193.8L626.0 191.5M627.0 190.0L628.0 188.5M628.0 188.5L629.0 188.0M629.0 188.0L630.0 187.5M635.0 189.5L636.0 188.8M637.0 188.0L638.0 186.2M649.0 186.5L650.0 182.0M650.0 182.0L651.0 180.8M652.0 179.5L653.0 178.2M653.0 178.2L654.0 176.8M654.0 176.8L655.0 175.5M656.0 175.8L657.0 176.0M660.0 178.7L661.0 177.3M661.0 177.3L662.0 176.0M663.0 175.3L664.0 174.7M674.0 181.3L675.0 182.2M679.0 183.5L680.0 182.7M688.0 183.0L689.0 181.8M693.0 180.0L694.0 178.8M694.0 178.8L695.0 177.5M696.0 180.0L697.0 182.5M702.0 188.0L703.0 186.2M703.0 186.2L704.0 184.5M704.0 184.5L705.0 184.0M705.0 184.0L706.0 183.5M706.0 183.5L707.0 182.0M707.0 182.0L708.0 184.8M711.0 189.0L712.0 188.2M712.0 188.2L713.0 187.5M721.0 189.8L722.0 189.5M722.0 189.5L723.0 187.8M723.0 187.8L724.0 186.0M729.0 185.8L730.0 184.5M735.0 186.0L736.0 183.2M736.0 183.2L737.0 180.5M743.0 190.0L744.0 188.8M744.0 188.8L745.0 187.5M746.0 185.5L747.0 183.5M749.0 183.0L750.0 181.8M750.0 181.8L751.0 180.5M751.0 180.5L752.0 177.5M758.0 189.8L759.0 192.0M761.0 191.5L762.0 190.5M762.0 190.5L763.0 189.5M764.0 188.5L765.0 187.7M766.0 186.8L767.0 186.0M768.0 185.3L769.0 184.7M769.0 184.7L770.0 184.0M770.0 184.0L771.0 182.8M772.0 181.7L773.0 180.5M773.0 180.5L774.0 179.0M774.0 179.0L775.0 177.5M776.0 176.0L777.0 174.3M778.0 172.7L779.0 171.0M782.0 173.5L783.0 174.7M789.0 181.0L790.0 179.5M790.0 179.5L791.0 178.0M794.0 178.5L795.0 177.0M798.0 172.8L799.0 171.7M803.0 172.5L804.0 171.0M805.0 169.8L806.0 168.5M814.0 173.0L815.0 172.0M815.0 172.0L816.0 171.0M816.0 171.0L817.0 170.0M817.0 170.0L818.0 169.0M827.0 170.5L828.0 167.8M832.0 157.2L833.0 156.5M842.5 163.0L844.0 157.0M845.0 154.5L846.0 152.0M846.0 152.0L847.0 148.0M849.0 136.0L850.0 133.8M850.0 133.8L851.0 131.5M852.0 130.8L853.0 130.0M866.0 145.5L867.0 142.8M867.0 142.8L868.0 140.0M868.0 140.0L869.0 138.8M869.0 138.8L870.0 137.5M871.0 136.5L872.0 135.5M875.0 136.8L876.0 133.5M876.0 133.5L877.0 132.5M877.0 132.5L878.0 131.5M884.0 140.0L885.0 138.5M885.0 138.5L886.0 137.0M890.0 141.0L891.0 140.2M893.0 137.2L894.0 135.0M895.0 133.8L896.0 132.5M896.0 132.5L897.0 131.0M897.0 131.0L898.0 129.5M900.0 132.0L901.0 129.5M901.0 129.5L902.0 127.0M904.0 119.5L905.0 111.5M907.0 111.5L908.0 109.2M908.0 109.2L909.0 107.0M909.0 107.0L910.0 106.5M929.0 124.0L930.0 121.2M930.0 121.2L931.0 118.5M931.0 118.5L932.0 116.5M937.0 115.0L938.0 113.8M938.0 113.8L939.0 112.5M941.0 113.5L942.0 112.5M942.0 112.5L943.0 111.5M947.0 113.5L948.0 111.8M954.0 112.5L955.0 112.5M957.0 111.8L958.0 111.0M961.0 110.0L962.0 109.5M964.0 107.5L965.0 102.0M966.0 100.0L967.0 98.0M971.0 96.5L972.0 96.0M972.0 96.0L973.0 95.5M973.0 95.5L974.0 94.8M974.0 94.8L975.0 94.0M977.0 95.0L978.0 92.5M978.0 92.5L979.0 90.0M981.0 94.0L982.0 93.5M982.0 93.5L983.0 93.0M986.0 92.0L987.0 91.2M987.0 91.2L988.0 90.3M992.0 86.8L993.0 86.7M994.0 86.5L995.0 85.8M995.0 85.8L996.0 85.2M998.0 83.5L999.0 82.5M1005.0 84.5L1006.0 83.8M1006.0 83.8L1007.0 83.0M1008.0 85.5L1009.0 88.0M1009.0 88.0L1010.0 86.8M1011.0 85.5L1012.0 84.0M1012.0 84.0L1013.0 82.5M1022.0 81.5L1023.0 80.0M1023.0 80.0L1024.0 78.5M1025.0 78.8L1026.0 79.2M1026.0 79.2L1027.0 79.5M1029.0 78.8L1030.0 78.5M1031.0 77.7L1032.0 76.8M1035.0 74.3L1036.0 73.5M1038.0 72.5L1039.0 72.0M1041.0 70.2L1042.0 69.3M1049.0 67.5L1050.0 66.5M1051.0 65.5L1052.0 64.5M1052.0 64.5L1053.0 63.5M1054.0 62.2L1055.0 61.0M1056.0 60.2L1057.0 59.5M1065.0 66.0L1066.0 64.2M1066.0 64.2L1067.0 62.5M1069.0 63.5L1070.5 59.5M1070.5 59.5L1072.0 62.0M1081.0 63.5L1082.0 64.2M1083.0 65.0L1084.5 62.5M1096.0 72.2L1097.0 71.5M1097.0 71.5L1098.0 71.8M1109.0 77.5L1110.0 77.0M1116.0 77.8L1117.0 77.0M1125.0 78.5L1126.0 77.2M1126.0 77.2L1127.0 76.0M1127.0 76.0L1128.0 73.8M1128.0 73.8L1129.0 71.5M1141.0 79.0L1142.0 78.0M1143.0 77.0L1144.0 76.0M1146.0 79.5L1147.0 78.8M1153.5 85.0L1155.0 82.0M1166.0 82.0L1167.0 81.0M1184.0 86.3L1185.0 87.0M1185.0 87.0L1186.0 86.0M1187.0 85.0L1188.0 84.7M1197.0 85.0L1198.2 83.5M1198.2 83.5L1199.5 82.0M1204.0 87.8L1205.0 87.0M1213.0 89.0L1214.0 88.0M1214.0 88.0L1215.0 87.0M1222.0 92.5L1223.0 88.5M1223.0 88.5L1224.0 87.8M1224.0 87.8L1225.0 87.0" stroke="#ff0000" stroke-width="1.4" fill="none" stroke-linecap="butt"/>
<path d="M842.5 160.0L842.5 167.5M1230.0 78.5L1230.0 79.5" stroke="#f0e264" stroke-width="1.3" fill="none"/>
<path d="M13.5 220.9L13.5 223.7M35.5 226.1L35.5 227.5M56.5 221.6L56.5 224.3M64.5 222.8L64.5 224.7M77.5 220.8L77.5 224.0M78.5 223.3L78.5 225.2M91.5 223.0L91.5 225.0M100.5 216.3L100.5 218.2M101.5 217.5L101.5 219.3M106.5 216.3L106.5 218.5M109.5 218.4L109.5 221.2M112.5 216.9L112.5 218.9M114.5 218.9L114.5 222.0M115.5 218.8L115.5 221.9M160.5 200.0L160.5 201.9M170.5 195.4L170.5 197.3M179.5 195.0L179.5 197.3M181.5 199.6L181.5 200.8M193.5 200.0L193.5 202.3M194.5 200.6L194.5 202.2M198.5 200.8L198.5 202.7M210.5 209.4L210.5 212.1M214.5 209.4L214.5 210.8M215.5 210.3L215.5 212.8M219.5 214.6L219.5 215.6M220.5 216.3L220.5 218.1M235.5 212.3L235.5 213.7M266.5 214.3L266.5 217.2M268.5 216.7L268.5 219.3M270.5 219.5L270.5 220.9M278.5 215.1L278.5 217.3M280.5 216.1L280.5 217.3M284.5 217.0L284.5 219.6M287.5 219.5L287.5 220.9M289.5 218.9L289.5 221.6M303.5 204.5L303.5 206.6M311.5 206.6L311.5 209.4M325.5 208.1L325.5 210.2M338.5 203.9L338.5 205.3M339.5 204.2L339.5 205.5M346.5 206.3L346.5 207.4M351.2 206.6L351.2 208.2M357.5 207.9L357.5 209.1M363.5 206.1L363.5 207.8M364.5 206.1L364.5 207.7M369.5 205.5L369.5 208.1M372.5 205.2L372.5 207.1M374.5 206.5L374.5 207.9M390.5 204.9L390.5 206.1M391.5 204.0L391.5 206.3M393.5 204.4L393.5 205.7M397.5 204.4L397.5 206.6M401.5 203.0L401.5 204.4M405.5 204.9L405.5 207.9M424.5 205.7L424.5 207.6M445.5 193.8L445.5 195.5M446.5 194.2L446.5 196.9M465.5 188.3L465.5 189.7M476.5 184.1L476.5 185.5M490.5 193.2L490.5 195.3M506.5 186.5L506.5 189.3M509.5 189.0L509.5 192.2M510.5 191.4L510.5 192.6M515.5 194.5L515.5 197.6M518.5 197.4L518.5 200.5M522.5 193.5L522.5 196.2M526.5 199.5L526.5 200.7M527.5 199.2L527.5 200.5M531.5 198.0L531.5 199.8M554.5 203.4L554.5 205.7M555.5 205.2L555.5 206.9M569.5 196.4L569.5 199.3M577.5 198.4L577.5 200.8M579.5 199.5L579.5 201.3M612.5 190.0L612.5 192.0M613.5 190.4L613.5 193.5M614.5 192.6L614.5 194.2M616.5 194.5L616.5 197.2M619.5 193.7L619.5 195.6M623.5 194.4L623.5 197.4M644.5 185.5L644.5 188.7M665.5 173.0L665.5 175.3M667.5 175.3L667.5 176.7M668.5 176.7L668.5 177.8M670.5 178.7L670.5 180.8M673.5 179.9L673.5 181.5M675.5 180.6L675.5 183.8M687.5 181.3L687.5 183.9M695.5 177.4L695.5 180.1M698.5 184.3L698.5 186.5M700.5 185.7L700.5 188.9M709.5 186.2L709.5 188.7M715.5 188.5L715.5 190.5M717.5 189.2L717.5 190.4M727.5 184.9L727.5 186.6M733.5 182.7L733.5 185.9M741.5 188.0L741.5 189.3M755.5 180.3L755.5 182.9M756.5 184.9L756.5 186.7M783.5 174.9L783.5 176.4M784.5 175.9L784.5 177.9M785.5 175.7L785.5 178.7M787.5 177.3L787.5 180.3M801.5 171.6L801.5 173.6M807.5 168.4L807.5 170.8M808.5 168.5L808.5 170.7M811.5 169.2L811.5 170.5M812.5 170.1L812.5 171.9M823.5 169.2L823.5 172.1M830.5 158.4L830.5 160.2M838.5 156.1L838.5 158.9M840.5 157.8L840.5 160.4M847.5 144.4L847.5 146.7M853.5 129.5L853.5 131.7M854.5 130.1L854.5 132.8M855.5 131.1L855.5 134.2M856.5 132.5L856.5 135.6M857.5 135.5L857.5 137.3M879.5 134.7L879.5 135.9M881.5 137.4L881.5 138.5M886.5 135.6L886.5 137.3M889.5 139.0L889.5 141.0M894.5 133.1L894.5 134.8M919.5 112.3L919.5 114.7M922.5 117.1L922.5 120.1M926.5 119.1L926.5 122.3M928.5 122.3L928.5 124.9M933.5 113.7L933.5 115.9M960.5 109.8L960.5 111.4M979.5 90.6L979.5 92.3M980.5 92.4L980.5 93.9M999.5 81.7L999.5 83.0M1003.5 83.1L1003.5 85.0M1019.5 79.2L1019.5 81.4M1060.5 62.7L1060.5 64.8M1088.5 68.6L1088.5 70.0M1092.5 69.3L1092.5 71.3M1099.5 71.1L1099.5 74.0M1100.5 73.6L1100.5 75.1M1110.5 76.5L1110.5 78.8M1113.5 78.0L1113.5 79.7M1117.5 76.5L1117.5 79.3M1131.5 70.9L1131.5 72.6M1134.5 74.4L1134.5 75.7M1138.5 77.4L1138.5 79.1M1139.5 76.9L1139.5 79.8M1150.5 79.2L1150.5 80.7M1151.5 80.9L1151.5 83.3M1163.5 80.1L1163.5 81.5M1171.4 79.9L1171.4 83.0M1182.5 84.0L1182.5 85.6M1200.2 81.6L1200.2 83.7M1201.5 84.0L1201.5 85.5M1202.5 85.9L1202.5 88.2M1205.5 86.5L1205.5 89.5M79.0 221.5L79.0 227.0M177.0 189.0L177.0 195.0M310.0 201.0L310.0 207.0M743.0 186.0L743.0 192.0M915.0 106.5L915.0 120.0M975.0 92.0L975.0 98.0M1053.0 59.0L1053.0 68.5M1061.0 61.5L1061.0 67.0" stroke="#0a84ff" stroke-width="1.3" fill="none"/>
<path d="M54.5 222.1L54.5 223.2M55.5 220.3L55.5 223.1M63.5 222.4L63.5 223.6M65.5 221.6L65.5 224.5M96.5 220.6L96.5 223.3M104.5 216.5L104.5 218.9M111.5 217.7L111.5 219.3M120.5 218.2L120.5 219.7M130.5 213.3L130.5 215.8M137.5 211.1L137.5 213.3M144.5 206.0L144.5 207.6M147.5 201.3L147.5 202.6M156.5 200.2L156.5 201.9M169.5 194.9L169.5 197.1M184.5 199.6L184.5 202.4M232.5 211.9L232.5 214.5M241.5 211.1L241.5 213.9M244.5 209.5L244.5 211.5M246.5 208.6L246.5 210.8M249.5 211.8L249.5 214.9M274.5 213.9L274.5 215.8M292.5 215.0L292.5 217.2M307.5 205.7L307.5 207.5M331.5 206.5L331.5 209.5M335.5 206.6L335.5 207.6M341.5 204.6L341.5 206.6M343.5 203.2L343.5 205.1M344.5 204.3L344.5 205.5M358.5 208.6L358.5 211.0M412.5 206.3L412.5 208.6M418.5 208.7L418.5 210.8M425.5 205.1L425.5 208.2M437.5 201.5L437.5 204.0M459.5 191.8L459.5 194.5M461.5 189.8L461.5 191.0M466.5 188.2L466.5 189.4M467.5 187.5L467.5 189.1M470.5 186.5L470.5 188.9M473.5 183.8L473.5 186.4M486.5 191.6L486.5 194.1M487.5 189.8L487.5 191.6M508.5 189.2L508.5 191.0M528.5 196.7L528.5 199.7M535.5 195.8L535.5 198.4M547.5 194.0L547.5 195.4M548.5 193.1L548.5 196.0M561.5 200.5L561.5 202.6M572.5 199.5L572.5 201.7M580.5 198.8L580.5 200.5M586.5 196.4L586.5 198.9M587.5 197.7L587.5 199.7M591.5 195.8L591.5 197.5M600.5 195.2L600.5 198.4M601.5 195.0L601.5 197.7M602.5 193.8L602.5 195.9M608.5 190.5L608.5 191.7M624.5 194.3L624.5 195.4M627.5 187.9L627.5 189.8M628.5 186.8L628.5 189.3M629.5 186.8L629.5 188.8M637.5 186.9L637.5 188.0M649.5 183.6L649.5 185.8M654.5 174.9L654.5 177.6M660.5 177.0L660.5 179.5M674.5 180.2L674.5 183.3M688.5 181.2L688.5 183.3M694.5 177.2L694.5 178.3M704.5 183.5L704.5 185.9M705.5 183.5L705.5 184.7M721.5 188.9L721.5 190.0M729.5 183.7L729.5 186.7M736.5 180.3L736.5 182.3M744.5 186.8L744.5 189.5M750.5 180.4L750.5 182.9M761.5 190.0L761.5 192.3M762.5 189.0L762.5 190.2M766.5 186.2L766.5 187.2M769.5 183.2L769.5 184.7M773.5 178.6L773.5 180.7M774.5 177.3L774.5 179.7M782.5 173.1L782.5 176.0M790.5 178.1L790.5 179.5M798.5 171.1L798.5 172.6M803.5 169.9L803.5 172.9M815.5 171.2L815.5 172.6M816.5 169.8L816.5 172.0M817.5 168.0L817.5 169.8M846.5 149.3L846.5 150.8M850.5 131.7L850.5 134.3M852.5 130.2L852.5 131.5M869.5 137.6L869.5 138.8M871.5 135.8L871.5 137.3M875.5 134.1L875.5 136.1M877.5 130.9L877.5 133.3M885.5 136.1L885.5 138.8M900.5 129.8L900.5 131.6M904.5 114.7L904.5 116.9M929.5 121.4L929.5 123.9M947.5 111.5L947.5 114.4M971.5 94.5L971.5 97.3M977.5 93.4L977.5 94.5M978.5 89.5L978.5 92.3M986.5 89.8L986.5 92.2M994.5 85.3L994.5 86.5M995.5 84.0L995.5 87.2M1009.5 85.5L1009.5 88.3M1011.5 83.0L1011.5 86.1M1012.5 82.5L1012.5 83.5M1023.5 78.7L1023.5 80.3M1025.5 77.6L1025.5 80.7M1038.5 70.5L1038.5 73.7M1041.5 69.2L1041.5 71.5M1052.5 62.8L1052.5 65.7M1054.5 60.7L1054.5 62.5M1065.5 63.5L1065.5 66.6M1066.5 61.7L1066.5 64.3M1081.5 63.7L1081.5 65.2M1083.8 62.0L1083.8 64.4M1096.5 70.2L1096.5 73.1M1125.5 76.7L1125.5 79.2M1127.5 73.2L1127.5 76.2M1141.5 77.9L1141.5 78.9M1143.5 74.6L1143.5 77.4M1154.2 82.5L1154.2 83.6M1185.5 85.6L1185.5 87.1M1198.9 81.2L1198.9 84.0M1213.5 87.5L1213.5 89.7M1222.5 89.9L1222.5 91.3M439.0 192.5L439.0 202.0M737.0 178.5L737.0 184.0M849.0 132.0L849.0 144.5M979.0 87.0L979.0 92.5M1070.5 55.0L1070.5 63.5" stroke="#ff0000" stroke-width="1.3" fill="none"/>
<path d="M6.5 46.9V239H1235.5V46.9" fill="none" stroke="#f4f4f4" stroke-width="1.25"/>
<line x1="5.9" y1="46.9" x2="1236.1" y2="46.9" stroke="#f4f4f4" stroke-width="1.25"/>
<text transform="scale(0.72,1)" x="1279.44 1288.33" y="232.80" fill="#e4e4e4" text-anchor="middle" font-family="'Liberation Sans',sans-serif" font-size="13.6">01</text>
<text transform="scale(0.72,1)" x="57.22 66.11" y="249.10" fill="#e4e4e4" text-anchor="middle" font-family="'Liberation Sans',sans-serif" font-size="13.6">04</text>
<text transform="scale(0.72,1)" x="115.56 124.44" y="249.10" fill="#e4e4e4" text-anchor="middle" font-family="'Liberation Sans',sans-serif" font-size="13.6">05</text>
<text transform="scale(0.72,1)" x="161.39 170.28" y="249.10" fill="#e4e4e4" text-anchor="middle" font-family="'Liberation Sans',sans-serif" font-size="13.6">09</text>
<text transform="scale(0.72,1)" x="247.50 256.39" y="249.10" fill="#e4e4e4" text-anchor="middle" font-family="'Liberation Sans',sans-serif" font-size="13.6">10</text>
<text transform="scale(0.72,1)" x="332.22 341.11" y="249.10" fill="#e4e4e4" text-anchor="middle" font-family="'Liberation Sans',sans-serif" font-size="13.6">11</text>
<text transform="scale(0.72,1)" x="412.78 421.67" y="249.10" fill="#e4e4e4" text-anchor="middle" font-family="'Liberation Sans',sans-serif" font-size="13.6">12</text>
<text transform="scale(0.72,1)" x="494.72 503.61" y="249.10" fill="#e4e4e4" text-anchor="middle" font-family="'Liberation Sans',sans-serif" font-size="13.6">13</text>
<text transform="scale(0.72,1)" x="571.11 580.00" y="249.10" fill="#e4e4e4" text-anchor="middle" font-family="'Liberation Sans',sans-serif" font-size="13.6">14</text>
<text transform="scale(0.72,1)" x="671.11 680.00" y="249.10" fill="#e4e4e4" text-anchor="middle" font-family="'Liberation Sans',sans-serif" font-size="13.6">16</text>
<text transform="scale(0.72,1)" x="714.17 723.06" y="249.10" fill="#e4e4e4" text-anchor="middle" font-family="'Liberation Sans',sans-serif" font-size="13.6">17</text>
<text transform="scale(0.72,1)" x="796.11 805.00" y="249.10" fill="#e4e4e4" text-anchor="middle" font-family="'Liberation Sans',sans-serif" font-size="13.6">18</text>
<text transform="scale(0.72,1)" x="871.11 880.00" y="249.10" fill="#e4e4e4" text-anchor="middle" font-family="'Liberation Sans',sans-serif" font-size="13.6">19</text>
<text transform="scale(0.72,1)" x="948.89 957.78" y="249.10" fill="#e4e4e4" text-anchor="middle" font-family="'Liberation Sans',sans-serif" font-size="13.6">20</text>
<text transform="scale(0.72,1)" x="1026.67 1035.56" y="249.10" fill="#e4e4e4" text-anchor="middle" font-family="'Liberation Sans',sans-serif" font-size="13.6">21</text>
<text transform="scale(0.72,1)" x="1110.00 1118.89" y="249.10" fill="#e4e4e4" text-anchor="middle" font-family="'Liberation Sans',sans-serif" font-size="13.6">22</text>
<text transform="scale(0.72,1)" x="1194.72 1203.61" y="249.10" fill="#e4e4e4" text-anchor="middle" font-family="'Liberation Sans',sans-serif" font-size="13.6">23</text>
<text transform="scale(0.72,1)" x="1279.44 1288.33" y="249.10" fill="#e4e4e4" text-anchor="middle" font-family="'Liberation Sans',sans-serif" font-size="13.6">00</text>
<text transform="scale(0.72,1)" x="1364.17 1373.06" y="249.10" fill="#e4e4e4" text-anchor="middle" font-family="'Liberation Sans',sans-serif" font-size="13.6">01</text>
<text transform="scale(0.72,1)" x="1450.28 1459.17" y="249.10" fill="#e4e4e4" text-anchor="middle" font-family="'Liberation Sans',sans-serif" font-size="13.6">02</text>
<text transform="scale(0.72,1)" x="1533.61 1542.50" y="249.10" fill="#e4e4e4" text-anchor="middle" font-family="'Liberation Sans',sans-serif" font-size="13.6">03</text>
<text transform="scale(0.72,1)" x="1614.17 1623.06" y="249.10" fill="#e4e4e4" text-anchor="middle" font-family="'Liberation Sans',sans-serif" font-size="13.6">04</text>
<text transform="scale(0.72,1)" x="1685.00 1693.89" y="249.10" fill="#e4e4e4" text-anchor="middle" font-family="'Liberation Sans',sans-serif" font-size="13.6">05</text>
<text transform="scale(0.72,1)" x="118.89 127.78" y="249.10" fill="#e4e4e4" text-anchor="middle" font-family="'Liberation Sans',sans-serif" font-size="13.6">08</text>
<text transform="scale(0.72,1)" x="634.72 643.61" y="249.10" fill="#e4e4e4" text-anchor="middle" font-family="'Liberation Sans',sans-serif" font-size="13.6">15</text>
<text transform="scale(0.72,1)" x="1720.87 1729.55 1738.23 1746.91 1755.59" y="54.70" fill="#e4e4e4" text-anchor="middle" font-family="'Liberation Sans',sans-serif" font-size="13.6">6,100</text>
<text transform="scale(0.72,1)" x="1720.87 1729.55 1738.23 1746.91 1755.59" y="90.50" fill="#e4e4e4" text-anchor="middle" font-family="'Liberation Sans',sans-serif" font-size="13.6">6,075</text>
<text transform="scale(0.72,1)" x="1720.87 1729.55 1738.23 1746.91 1755.59" y="125.80" fill="#e4e4e4" text-anchor="middle" font-family="'Liberation Sans',sans-serif" font-size="13.6">6,050</text>
<text transform="scale(0.72,1)" x="1720.87 1729.55 1738.23 1746.91 1755.59" y="160.80" fill="#e4e4e4" text-anchor="middle" font-family="'Liberation Sans',sans-serif" font-size="13.6">6,025</text>
<text transform="scale(0.72,1)" x="1720.87 1729.55 1738.23 1746.91 1755.59" y="195.80" fill="#e4e4e4" text-anchor="middle" font-family="'Liberation Sans',sans-serif" font-size="13.6">6,000</text>
<text transform="scale(0.72,1)" x="1720.87 1729.55 1738.23 1746.91 1755.59" y="230.90" fill="#e4e4e4" text-anchor="middle" font-family="'Liberation Sans',sans-serif" font-size="13.6">5,975</text>
<rect x="1236" y="68.5" width="58.6" height="21.4" fill="#d4d4d4"/>
<rect x="1236" y="68.5" width="58.6" height="1.3" fill="#e6e6e6"/>
<rect x="1236" y="88.6" width="58.6" height="1.3" fill="#e2e2e2"/>
<text transform="scale(0.8,1)" x="1565.06 1573.19 1581.31 1589.44 1597.56" y="82.40" fill="#000" text-anchor="middle" font-family="'Liberation Sans',sans-serif" font-size="13.6" font-weight="bold">6,085</text>
<rect x="6" y="258.8" width="1289" height="229.5" fill="#1a1a1a"/>
<rect x="6.5" y="259.7" width="1229.0" height="212.2" fill="#000"/>
<line x1="7" y1="277.5" x2="1235" y2="277.5" stroke="#c8c8c8" stroke-width="1" stroke-dasharray="1 1"/>
<line x1="7" y1="312.5" x2="1235" y2="312.5" stroke="#c8c8c8" stroke-width="1" stroke-dasharray="1 1"/>
<line x1="7" y1="347.5" x2="1235" y2="347.5" stroke="#c8c8c8" stroke-width="1" stroke-dasharray="1 1"/>
<line x1="7" y1="382.5" x2="1235" y2="382.5" stroke="#c8c8c8" stroke-width="1" stroke-dasharray="1 1"/>
<line x1="7" y1="417.5" x2="1235" y2="417.5" stroke="#c8c8c8" stroke-width="1" stroke-dasharray="1 1"/>
<line x1="7" y1="453.5" x2="1235" y2="453.5" stroke="#c8c8c8" stroke-width="1" stroke-dasharray="1 1"/>
<line x1="38.5" y1="261" x2="38.5" y2="471" stroke="#c8c8c8" stroke-width="1" stroke-dasharray="1 1"/>
<line x1="80.5" y1="261" x2="80.5" y2="471" stroke="#c8c8c8" stroke-width="1" stroke-dasharray="1 1"/>
<line x1="98.5" y1="261" x2="98.5" y2="471" stroke="#c8c8c8" stroke-width="1" stroke-dasharray="1 1"/>
<line x1="113.5" y1="261" x2="113.5" y2="471" stroke="#c8c8c8" stroke-width="1" stroke-dasharray="1 1"/>
<line x1="175.5" y1="261" x2="175.5" y2="471" stroke="#c8c8c8" stroke-width="1" stroke-dasharray="1 1"/>
<line x1="236.5" y1="261" x2="236.5" y2="471" stroke="#c8c8c8" stroke-width="1" stroke-dasharray="1 1"/>
<line x1="294.5" y1="261" x2="294.5" y2="471" stroke="#c8c8c8" stroke-width="1" stroke-dasharray="1 1"/>
<line x1="353.5" y1="261" x2="353.5" y2="471" stroke="#c8c8c8" stroke-width="1" stroke-dasharray="1 1"/>
<line x1="408.5" y1="261" x2="408.5" y2="471" stroke="#c8c8c8" stroke-width="1" stroke-dasharray="1 1"/>
<line x1="469.5" y1="261" x2="469.5" y2="471" stroke="#c8c8c8" stroke-width="1" stroke-dasharray="1 1"/>
<line x1="480.5" y1="261" x2="480.5" y2="471" stroke="#c8c8c8" stroke-width="1" stroke-dasharray="1 1"/>
<line x1="511.5" y1="261" x2="511.5" y2="471" stroke="#c8c8c8" stroke-width="1" stroke-dasharray="1 1"/>
<line x1="570.5" y1="261" x2="570.5" y2="471" stroke="#c8c8c8" stroke-width="1" stroke-dasharray="1 1"/>
<line x1="624.5" y1="261" x2="624.5" y2="471" stroke="#c8c8c8" stroke-width="1" stroke-dasharray="1 1"/>
<line x1="680.5" y1="261" x2="680.5" y2="471" stroke="#c8c8c8" stroke-width="1" stroke-dasharray="1 1"/>
<line x1="736.5" y1="261" x2="736.5" y2="471" stroke="#c8c8c8" stroke-width="1" stroke-dasharray="1 1"/>
<line x1="796.5" y1="261" x2="796.5" y2="471" stroke="#c8c8c8" stroke-width="1" stroke-dasharray="1 1"/>
<line x1="857.5" y1="261" x2="857.5" y2="471" stroke="#c8c8c8" stroke-width="1" stroke-dasharray="1 1"/>
<line x1="918.5" y1="261" x2="918.5" y2="471" stroke="#c8c8c8" stroke-width="1" stroke-dasharray="1 1"/>
<line x1="979.5" y1="261" x2="979.5" y2="471" stroke="#c8c8c8" stroke-width="1" stroke-dasharray="1 1"/>
<line x1="1041.5" y1="261" x2="1041.5" y2="471" stroke="#c8c8c8" stroke-width="1" stroke-dasharray="1 1"/>
<line x1="1101.5" y1="261" x2="1101.5" y2="471" stroke="#c8c8c8" stroke-width="1" stroke-dasharray="1 1"/>
<line x1="1159.5" y1="261" x2="1159.5" y2="471" stroke="#c8c8c8" stroke-width="1" stroke-dasharray="1 1"/>
<line x1="1210.5" y1="261" x2="1210.5" y2="471" stroke="#c8c8c8" stroke-width="1" stroke-dasharray="1 1"/>
<text x="7.70" y="273.40" fill="#e4e4e4" font-family="'IPAGothic','Noto Sans CJK JP',sans-serif" font-size="11.8" textLength="24.64" lengthAdjust="spacingAndGlyphs">時刻</text>
<text transform="scale(0.68,1)" x="52.09 61.15 70.21 79.26 88.32 97.38" y="273.20" fill="#e4e4e4" text-anchor="middle" font-family="'Liberation Sans',sans-serif" font-size="13.2">:05:30</text>
<text x="75.46" y="273.40" fill="#e4e4e4" font-family="'IPAGothic','Noto Sans CJK JP',sans-serif" font-size="11.8" textLength="24.64" lengthAdjust="spacingAndGlyphs">始値</text>
<text transform="scale(0.68,1)" x="151.74 160.79 169.85 178.91" y="273.20" fill="#e4e4e4" text-anchor="middle" font-family="'Liberation Sans',sans-serif" font-size="13.2">:---</text>
<text x="130.90" y="273.40" fill="#e4e4e4" font-family="'IPAGothic','Noto Sans CJK JP',sans-serif" font-size="11.8" textLength="24.64" lengthAdjust="spacingAndGlyphs">高値</text>
<text transform="scale(0.68,1)" x="233.26 242.32 251.38 260.44" y="273.20" fill="#e4e4e4" text-anchor="middle" font-family="'Liberation Sans',sans-serif" font-size="13.2">:---</text>
<text x="186.34" y="273.40" fill="#e4e4e4" font-family="'IPAGothic','Noto Sans CJK JP',sans-serif" font-size="11.8" textLength="24.64" lengthAdjust="spacingAndGlyphs">安値</text>
<text transform="scale(0.68,1)" x="314.79 323.85 332.91 341.97" y="273.20" fill="#e4e4e4" text-anchor="middle" font-family="'Liberation Sans',sans-serif" font-size="13.2">:---</text>
<text x="241.78" y="273.40" fill="#e4e4e4" font-family="'IPAGothic','Noto Sans CJK JP',sans-serif" font-size="11.8" textLength="24.64" lengthAdjust="spacingAndGlyphs">終値</text>
<text transform="scale(0.68,1)" x="396.32 405.38 414.44 423.50" y="273.20" fill="#e4e4e4" text-anchor="middle" font-family="'Liberation Sans',sans-serif" font-size="13.2">:---</text>
<path d="M11.0 446.9L12.0 446.9M12.0 447.8L13.0 447.8M13.0 448.6L14.0 448.6M17.0 451.0L17.0 455.0M27.5 460.0L28.5 460.0M28.5 460.2L29.5 460.2M49.0 454.0L50.0 454.0M51.0 453.5L52.2 453.5M90.0 453.7L91.0 453.7M91.0 454.0L92.0 454.0M92.0 454.3L93.0 454.3M93.0 455.0L94.0 455.0M95.0 457.2L96.0 457.2M105.2 430.0L105.2 433.0M107.0 437.8L108.5 437.8M110.0 442.9L111.0 442.9M111.0 442.6L112.0 442.6M116.0 450.0L117.0 450.0M117.0 450.0L118.0 450.0M118.0 449.7L119.0 449.7M122.0 447.6L123.0 447.6M126.9 443.2L126.9 441.0M127.5 440.2L129.0 440.2M129.0 439.4L130.0 439.4M130.0 439.2L131.0 439.2M131.0 439.1L132.0 439.1M138.0 429.5L139.0 429.5M143.0 422.2L144.0 422.2M145.5 418.8L145.5 415.0M146.0 414.5L147.0 414.5M149.0 410.0L150.0 410.0M152.0 412.5L153.0 412.5M153.0 412.5L154.0 412.5M154.0 412.6L155.0 412.6M155.0 412.9L156.0 412.9M157.0 410.0L158.0 410.0M159.0 407.9L160.0 407.9M152.0 412.5L153.0 412.5M154.0 412.5L155.0 412.5M155.0 412.6L156.0 412.6M156.0 412.9L157.0 412.9M159.0 407.6L160.0 407.6M162.0 405.6L163.0 405.6M163.0 405.9L164.0 405.9M176.0 408.4L177.0 408.4M179.0 411.9L180.0 411.9M180.0 411.6L181.0 411.6M182.0 413.0L183.0 413.0M184.0 412.0L185.0 412.0M185.0 411.0L186.0 411.0M193.0 400.1L194.0 400.1M197.0 401.4L198.0 401.4M198.0 401.1L199.0 401.1M200.5 404.5L200.5 408.0M203.0 408.0L204.0 408.0M208.5 410.8L208.5 413.5M209.0 412.6L210.0 412.6M213.0 407.9L214.0 407.9M216.5 413.0L216.5 415.5M217.0 415.4L218.0 415.4M218.0 415.1L219.0 415.1M232.0 417.4L233.0 417.4M235.2 413.5L235.2 417.5M239.0 423.6L240.0 423.6M244.5 416.6L245.8 416.6M250.5 422.2L251.5 422.2M251.5 422.8L252.5 422.8M253.5 423.8L254.5 423.8M257.5 429.0L258.8 429.0M258.8 428.0L260.0 428.0M260.0 427.6L261.0 427.6M261.0 427.9L262.0 427.9M264.0 426.2L265.2 426.2M265.2 425.5L266.3 425.5M270.5 430.5L270.5 433.0M283.3 424.0L284.5 424.0M284.5 424.5L285.5 424.5M286.5 425.9L287.8 425.9M287.8 425.6L289.0 425.6M289.0 426.0L290.0 426.0M290.0 427.0L291.0 427.0M291.0 426.5L292.5 426.5M294.0 429.9L295.0 429.9M296.5 429.5L296.5 425.5M305.0 412.8L306.5 412.8M309.0 418.0L310.0 418.0M312.0 422.5L313.0 422.5M314.0 422.5L315.0 422.5M319.0 423.5L320.0 423.5M321.0 422.0L322.2 422.0M322.2 421.0L323.3 421.0M343.0 427.2L344.0 427.2M353.0 423.9L354.0 423.9M354.0 423.8L355.0 423.8M360.0 419.9L361.0 419.9M362.0 416.9L363.0 416.9M364.0 412.9L365.0 412.9M373.0 414.5L374.0 414.5M378.0 416.0L379.2 416.0M379.2 416.0L380.5 416.0M380.5 415.8L381.7 415.8M381.7 415.5L382.8 415.5M382.8 415.2L384.0 415.2M386.0 413.0L387.2 413.0M392.8 413.8L394.0 413.8M396.0 415.7L397.0 415.7M397.0 416.4L398.0 416.4M400.0 418.5L401.0 418.5M401.0 419.2L402.0 419.2M404.0 422.1L405.0 422.1M406.0 420.4L407.0 420.4M408.0 422.2L409.0 422.2M409.0 423.5L410.0 423.5M410.0 424.5L411.0 424.5M411.0 425.2L412.0 425.2M431.5 429.2L432.8 429.2M435.5 426.6L436.5 426.6M437.5 423.6L438.5 423.6M438.5 422.9L439.5 422.9M442.5 411.8L443.5 411.8M443.5 411.2L444.5 411.2M447.0 407.9L448.0 407.9M455.0 412.0L456.0 412.0M458.0 407.8L459.0 407.8M459.0 407.1L460.0 407.1M462.0 404.9L463.0 404.9M464.0 404.6L465.0 404.6M465.0 404.2L466.0 404.2M467.0 403.2L468.0 403.2M471.0 401.4L472.0 401.4M472.5 401.5L472.5 399.2M474.0 396.6L475.0 396.6M475.0 395.9L476.0 395.9M476.0 395.0L477.0 395.0M483.0 359.0L484.0 359.0M485.0 359.6L486.0 359.6M486.0 357.9L487.0 357.9M487.0 357.0L488.0 357.0M495.0 361.0L496.0 361.0M496.0 361.0L497.0 361.0M497.0 360.1L498.0 360.1M499.0 357.2L500.0 357.2M501.0 355.8L502.0 355.8M506.0 358.5L507.0 358.5M507.0 358.5L508.0 358.5M508.0 359.5L509.0 359.5M513.0 356.8L514.0 356.8M521.0 356.8L522.0 356.8M525.0 356.8L525.0 359.5M528.0 353.8L529.0 353.8M534.0 352.4L535.0 352.4M538.0 354.1L539.0 354.1M542.0 361.0L543.0 361.0M543.0 362.0L544.0 362.0M553.0 363.8L554.0 363.8M554.0 363.2L555.0 363.2M555.0 363.0L556.0 363.0M556.0 363.0L557.0 363.0M558.5 360.8L558.5 358.5M559.0 358.8L560.0 358.8M560.0 359.2L561.0 359.2M562.0 359.8L563.0 359.8M568.0 342.2L569.5 342.2M570.2 342.0L570.2 347.0M572.0 347.0L573.0 347.0M575.5 346.0L577.0 346.0M577.0 346.4L578.2 346.4M578.2 346.1L579.5 346.1M579.5 346.3L580.7 346.3M583.0 348.0L584.0 348.0M585.0 348.0L586.0 348.0M586.0 348.5L587.0 348.5M593.0 348.9L594.0 348.9M599.0 350.8L600.0 350.8M600.0 350.2L601.0 350.2M605.5 349.9L606.8 349.9M606.8 350.6L608.0 350.6M601.0 351.1L602.0 351.1M615.0 355.0L616.0 355.0M621.0 351.4L622.0 351.4M628.0 342.1L629.0 342.1M630.0 342.4L631.0 342.4M631.0 342.9L632.0 342.9M636.0 338.8L637.0 338.8M637.0 339.1L638.0 339.1M642.0 340.6L643.0 340.6M643.0 341.2L644.0 341.2M648.0 340.2L649.0 340.2M650.0 339.5L651.0 339.5M651.0 339.5L652.0 339.5M652.0 339.5L653.0 339.5M656.0 335.0L657.0 335.0M657.0 335.5L658.0 335.5M661.0 337.0L662.0 337.0M663.0 335.4L664.0 335.4M664.0 335.2L665.0 335.2M670.0 332.9L671.0 332.9M672.5 327.5L672.5 330.0M675.0 331.8L676.0 331.8M680.0 332.2L681.0 332.2M682.0 340.5L683.0 340.5M686.0 337.5L687.0 337.5M691.0 333.8L692.0 333.8M692.0 333.2L693.0 333.2M695.0 332.5L696.0 332.5M699.0 335.5L700.0 335.5M701.0 333.8L702.0 333.8M718.5 349.9L719.8 349.9M727.0 348.4L728.0 348.4M730.0 348.4L731.0 348.4M731.0 348.2L732.0 348.2M734.0 349.1L735.0 349.1M739.0 343.5L740.0 343.5M740.0 343.5L741.0 343.5M741.0 343.5L742.0 343.5M743.2 344.6L744.5 344.6M744.5 346.0L746.0 346.0M756.5 342.8L756.5 340.5M761.0 344.0L762.0 344.0M762.0 344.6L763.0 344.6M763.0 343.9L764.0 343.9M764.0 343.9L765.0 343.9M765.0 344.6L766.0 344.6M766.0 344.1L767.0 344.1M776.0 330.1L777.0 330.1M778.0 329.0L779.0 329.0M779.0 329.0L780.0 329.0M780.0 328.9L781.0 328.9M781.0 328.6L782.0 328.6M783.0 328.5L784.0 328.5M784.0 328.6L785.0 328.6M790.5 333.0L790.5 330.5M798.8 319.0L798.8 322.5M800.2 322.5L800.2 325.5M804.0 331.6L805.0 331.6M805.0 329.9L806.0 329.9M806.0 329.4L807.0 329.4M807.0 330.1L808.0 330.1M809.5 333.0L809.5 335.5M827.0 334.2L828.0 334.2M829.5 331.2L829.5 328.0M831.5 326.1L832.8 326.1M832.8 327.4L834.0 327.4M835.0 327.2L836.0 327.2M841.5 332.0L843.0 332.0M849.5 318.8L851.0 318.8M853.0 315.6L854.0 315.6M854.0 315.9L855.0 315.9M855.0 316.4L856.0 316.4M857.0 318.0L858.0 318.0M861.0 316.8L862.0 316.8M863.0 316.2L864.0 316.2M871.5 296.2L873.0 296.2M873.0 296.8L874.0 296.8M883.0 288.8L883.0 285.0M886.0 281.0L886.0 287.0M891.0 286.2L892.0 286.2M892.0 286.0L893.5 286.0M895.8 284.0L895.8 278.5M896.5 278.8L898.0 278.8M906.0 277.2L907.0 277.2M909.0 277.2L910.0 277.2M910.5 277.0L910.5 279.2M915.6 286.0L915.6 288.8M916.9 288.8L916.9 291.5M917.5 292.1L918.5 292.1M926.2 298.0L926.2 303.0M935.0 311.6L936.0 311.6M936.0 311.9L937.0 311.9M944.0 304.1L945.0 304.1M945.0 304.4L946.0 304.4M948.0 307.9L949.0 307.9M953.5 314.9L954.5 314.9M954.5 314.6L955.5 314.6M961.0 312.4L962.0 312.4M965.8 306.3L965.8 303.7M967.5 300.8L968.8 300.8M968.8 300.2L970.0 300.2M975.5 302.2L976.5 302.2M976.5 302.8L977.8 302.8M977.8 302.2L979.0 302.2M979.0 302.2L980.0 302.2M980.0 302.8L981.0 302.8M981.0 302.5L982.0 302.5M982.0 301.5L983.0 301.5M983.0 300.5L984.0 300.5M986.5 298.0L988.0 298.0M989.5 295.0L991.0 295.0M994.5 284.8L995.8 284.8M997.0 284.4L998.0 284.4M998.0 285.1L999.0 285.1M1020.1 294.0L1020.1 296.5M1023.2 298.2L1024.5 298.2M1038.5 296.0L1038.5 293.0M1045.0 295.8L1046.0 295.8M1048.0 296.8L1049.0 296.8M1051.2 293.8L1052.5 293.8M1052.5 292.8L1054.0 292.8M1089.0 277.8L1090.0 277.8M1091.0 279.1L1092.0 279.1M1094.0 278.2L1095.0 278.2M1096.0 279.1L1097.0 279.1M1106.5 276.0L1107.5 276.0M1110.0 273.5L1110.0 276.5M1113.0 276.0L1113.0 273.0M1128.0 278.0L1129.0 278.0M1130.0 275.6L1131.0 275.6M1131.0 275.9L1132.0 275.9M1132.0 276.2L1133.0 276.2M1133.0 276.5L1134.0 276.5M1156.5 275.8L1157.8 275.8M1190.0 276.5L1191.0 276.5M1219.0 286.0L1220.5 286.0M1226.5 285.4L1227.5 285.4M1227.5 285.1L1228.5 285.1M56.3 449.5L58.7 449.5M68.3 450.5L70.7 450.5M73.8 453.5L76.2 453.5M77.8 453.5L80.2 453.5M814.8 330.5L817.2 330.5M1150.3 276.0L1152.7 276.0M1200.3 276.0L1202.7 276.0M1204.3 276.0L1206.7 276.0" stroke="#f0e264" stroke-width="1.4" fill="none" stroke-linecap="butt"/>
<path d="M18.1 455.0L18.1 457.8M19.4 457.8L19.4 460.5M25.5 458.0L26.5 458.0M84.0 454.0L85.5 454.0M96.0 458.8L97.0 458.8M106.5 433.0L106.5 437.0M109.2 438.5L109.2 443.0M112.0 443.1L113.0 443.1M113.0 444.4L114.0 444.4M114.5 445.0L114.5 447.5M115.5 447.5L115.5 450.0M120.0 448.3L121.0 448.3M133.0 437.1L134.0 437.1M134.0 435.8L135.0 435.8M139.0 429.5L140.0 429.5M150.0 409.9L151.0 409.9M151.0 411.6L152.0 411.6M151.0 411.8L152.0 411.8M153.0 412.5L154.0 412.5M164.0 406.5L165.0 406.5M171.0 406.2L172.0 406.2M172.0 406.8L173.0 406.8M173.0 407.6L174.0 407.6M174.0 408.9L175.0 408.9M177.0 409.0L178.0 409.0M178.0 411.0L179.0 411.0M181.0 412.0L182.0 412.0M183.0 413.0L184.0 413.0M191.0 401.5L192.0 401.5M192.0 400.5L193.0 400.5M194.0 400.4L195.0 400.4M199.5 401.0L199.5 404.5M207.5 408.0L207.5 410.8M215.5 410.5L215.5 413.0M219.5 415.0L219.5 418.8M220.5 418.8L220.5 422.5M221.5 422.5L221.5 424.8M223.5 427.0L223.5 431.0M236.0 418.5L237.5 418.5M247.8 417.0L247.8 420.5M248.5 420.8L249.5 420.8M255.5 426.8L256.5 426.8M256.5 428.6L257.5 428.6M269.4 427.5L269.4 430.5M271.5 433.0L271.5 435.5M274.0 427.5L275.0 427.5M276.0 423.5L277.0 423.5M285.5 425.5L286.5 425.5M293.2 425.5L293.2 430.0M300.0 415.4L301.0 415.4M301.0 416.2L302.0 416.2M307.2 412.5L307.2 419.5M310.5 417.5L310.5 420.0M311.5 420.0L311.5 422.5M315.0 422.8L316.0 422.8M316.0 423.5L317.0 423.5M324.5 420.4L325.7 420.4M326.8 424.1L328.0 424.1M329.0 426.9L330.0 426.9M349.5 427.1L350.8 427.1M350.8 428.4L352.0 428.4M355.0 423.6L356.0 423.6M377.2 413.0L377.2 416.0M387.2 414.0L388.5 414.0M398.0 417.1L399.0 417.1M399.0 417.8L400.0 417.8M402.0 420.2L403.0 420.2M403.0 421.8L404.0 421.8M407.0 420.8L408.0 420.8M412.0 425.5L413.0 425.5M413.0 425.8L414.0 425.8M414.8 426.0L414.8 430.5M415.5 431.0L416.5 431.0M424.5 431.4L425.5 431.4M448.0 408.5L449.0 408.5M449.0 410.5L450.0 410.5M463.0 404.8L464.0 404.8M468.0 402.5L469.0 402.5M482.2 355.5L482.2 358.5M484.0 360.0L485.0 360.0M489.0 357.6L490.0 357.6M491.5 359.5L491.5 362.0M492.5 362.0L492.5 364.5M504.5 353.0L504.5 355.8M505.5 355.8L505.5 358.5M509.0 361.5L510.0 361.5M514.0 357.5L515.0 357.5M516.8 358.5L516.8 362.0M520.0 358.2L521.0 358.2M524.0 354.0L524.0 356.8M536.0 351.4L537.0 351.4M537.0 353.1L538.0 353.1M539.0 354.4L540.0 354.4M540.5 354.5L540.5 359.5M544.0 363.0L545.0 363.0M545.0 364.5L546.0 364.5M546.0 366.5L547.0 366.5M550.0 363.1L551.0 363.1M552.0 363.6L553.0 363.6M561.0 359.8L562.0 359.8M580.7 347.0L581.8 347.0M587.0 349.5L588.0 349.5M588.0 350.5L589.0 350.5M591.0 347.0L592.0 347.0M592.0 348.0L593.0 348.0M594.0 349.6L595.0 349.6M595.8 350.0L595.8 355.0M601.0 350.7L602.0 350.7M602.0 352.2L603.0 352.2M605.0 349.8L606.0 349.8M613.0 353.5L614.0 353.5M638.0 340.4L639.0 340.4M658.0 336.5L659.0 336.5M659.0 337.8L660.0 337.8M662.0 336.0L663.0 336.0M673.5 330.0L673.5 332.5M674.0 332.2L675.0 332.2M676.5 331.5L676.5 336.5M679.0 331.8L680.0 331.8M684.0 337.0L685.0 337.0M694.0 332.5L695.0 332.5M696.5 332.5L696.5 334.8M697.5 334.8L697.5 337.0M705.8 329.5L705.8 335.5M706.5 336.0L707.7 336.0M707.7 337.0L708.8 337.0M714.0 339.2L715.0 339.2M715.0 340.8L716.0 340.8M716.8 341.5L716.8 344.0M718.0 344.0L718.0 349.0M722.0 353.6L723.0 353.6M728.5 348.0L728.5 356.5M738.0 344.1L739.0 344.1M742.0 343.9L743.2 343.9M746.0 347.8L747.5 347.8M760.0 342.0L761.0 342.0M768.5 341.5L768.5 336.5M769.0 337.1L770.0 337.1M774.0 329.4L775.0 329.4M786.0 329.4L787.0 329.4M787.0 330.1L788.0 330.1M788.0 331.1L789.0 331.1M789.0 332.4L790.0 332.4M793.0 326.4L794.0 326.4M794.0 327.1L795.0 327.1M801.8 325.5L801.8 328.5M803.2 328.5L803.2 332.5M808.5 330.5L808.5 333.0M820.0 331.4L821.0 331.4M837.0 327.5L838.0 327.5M838.0 327.8L839.0 327.8M840.9 330.2L840.9 332.5M856.0 317.1L857.0 317.1M858.0 319.0L859.0 319.0M864.0 316.8L865.0 316.8M866.0 318.1L867.0 318.1M878.0 285.6L879.0 285.6M880.8 287.5L880.8 292.5M882.0 292.5L882.0 288.8M888.0 285.9L889.0 285.9M889.0 286.6L890.0 286.6M898.0 279.5L899.0 279.5M899.0 280.5L900.0 280.5M900.0 281.9L901.0 281.9M901.0 283.6L902.0 283.6M902.0 283.6L903.0 283.6M907.0 277.8L908.0 277.8M908.0 277.8L909.0 277.8M911.5 279.2L911.5 281.5M912.0 282.1L913.0 282.1M913.0 283.4L914.0 283.4M914.0 285.0L915.0 285.0M918.5 293.4L919.5 293.4M920.8 294.8L922.0 294.8M922.0 295.2L923.0 295.2M923.0 295.8L924.0 295.8M927.0 303.9L928.0 303.9M928.0 305.6L929.0 305.6M931.5 306.1L932.5 306.1M933.1 307.0L933.1 309.2M934.4 309.2L934.4 311.5M939.8 309.0L939.8 311.5M946.0 305.2L947.0 305.2M947.0 306.8L948.0 306.8M949.0 308.6L950.0 308.6M950.8 309.0L950.8 312.0M952.5 314.2L953.5 314.2M955.5 315.1L956.7 315.1M963.0 308.0L964.0 308.0M974.5 300.8L975.5 300.8M993.9 288.0L993.9 285.0M1004.0 283.5L1005.0 283.5M1012.6 282.0L1012.6 285.5M1013.9 285.5L1013.9 289.0M1015.2 289.0L1015.2 292.0M1018.8 289.0L1018.8 294.0M1021.4 296.5L1021.4 299.0M1041.5 288.5L1041.5 293.0M1044.5 288.0L1044.5 295.5M1050.0 295.2L1051.2 295.2M1056.0 289.0L1057.0 289.0M1058.5 288.0L1058.5 291.0M1069.5 293.8L1070.5 293.8M1073.0 285.5L1073.0 281.5M1075.5 277.4L1076.7 277.4M1087.0 277.2L1088.0 277.2M1095.0 278.4L1096.0 278.4M1106.0 273.5L1106.0 276.5M1113.5 273.0L1115.0 273.0M1120.5 270.8L1121.5 270.8M1126.0 274.7L1127.0 274.7M1136.2 275.0L1137.3 275.0M1139.1 273.0L1139.1 276.2M1140.4 276.2L1140.4 279.5M1189.0 276.5L1190.0 276.5M16.8 455.0L18.2 455.0M27.8 460.5L29.2 460.5M36.8 456.5L39.2 456.5M47.3 454.5L48.7 454.5M92.3 454.5L93.7 454.5M102.3 432.0L103.7 432.0M103.8 430.0L105.2 430.0M105.3 433.0L106.7 433.0M106.3 437.0L107.7 437.0M107.8 438.5L109.2 438.5M109.3 443.0L110.7 443.0M113.3 445.0L114.7 445.0M115.3 450.0L116.7 450.0M137.3 429.5L138.7 429.5M147.3 413.0L148.7 413.0M153.3 412.5L154.7 412.5M154.3 412.5L155.7 412.5M163.3 406.0L164.7 406.0M170.3 406.0L171.7 406.0M178.3 412.0L179.7 412.0M180.3 411.5L181.7 411.5M188.3 407.0L189.7 407.0M198.3 401.0L199.7 401.0M200.3 408.0L201.7 408.0M208.3 413.5L209.7 413.5M216.3 415.5L217.7 415.5M220.3 422.5L221.7 422.5M223.3 431.0L224.7 431.0M233.8 413.5L235.2 413.5M238.3 423.5L239.7 423.5M243.8 416.5L245.2 416.5M247.8 420.5L249.2 420.5M250.8 422.5L252.2 422.5M259.3 427.5L260.7 427.5M269.3 430.5L270.7 430.5M283.8 424.0L285.2 424.0M293.3 430.0L294.7 430.0M314.3 422.5L315.7 422.5M329.3 427.5L330.7 427.5M332.8 425.5L335.2 425.5M336.8 425.5L339.2 425.5M363.3 413.0L364.7 413.0M377.3 416.0L378.7 416.0M396.3 416.0L397.7 416.0M398.3 417.5L399.7 417.5M401.3 419.5L402.7 419.5M406.3 420.0L407.7 420.0M408.3 423.0L409.7 423.0M414.8 430.5L416.2 430.5M434.8 427.5L436.2 427.5M438.8 422.5L440.2 422.5M447.3 407.5L448.7 407.5M467.3 403.0L468.7 403.0M478.8 390.5L480.2 390.5M482.3 358.5L483.7 358.5M488.3 357.0L489.7 357.0M492.3 364.5L493.7 364.5M494.3 361.0L495.7 361.0M505.3 358.5L506.7 358.5M507.3 358.5L508.7 358.5M512.3 356.5L513.7 356.5M529.3 353.0L530.7 353.0M535.3 350.5L536.7 350.5M539.3 354.5L540.7 354.5M544.3 363.5L545.7 363.5M546.3 367.5L547.7 367.5M556.3 363.0L557.7 363.0M568.8 342.0L570.2 342.0M582.3 348.0L583.7 348.0M594.3 350.0L595.7 350.0M595.8 355.0L597.2 355.0M600.3 350.0L601.7 350.0M600.3 350.5L601.7 350.5M630.3 342.5L631.7 342.5M636.3 338.5L637.7 338.5M656.3 335.0L657.7 335.0M658.3 337.0L659.7 337.0M671.3 327.5L672.7 327.5M676.3 336.5L677.7 336.5M690.3 334.0L691.7 334.0M705.8 335.5L707.2 335.5M716.8 344.0L718.2 344.0M717.8 349.0L719.2 349.0M727.3 348.0L728.7 348.0M743.8 345.0L745.2 345.0M756.3 340.5L757.7 340.5M761.3 345.0L762.7 345.0M763.3 343.5L764.7 343.5M777.3 329.0L778.7 329.0M779.3 329.0L780.7 329.0M783.3 328.5L784.7 328.5M787.3 330.5L788.7 330.5M800.3 325.5L801.7 325.5M803.3 332.5L804.7 332.5M807.3 330.5L808.7 330.5M840.8 332.5L842.2 332.5M852.3 315.5L853.7 315.5M856.3 317.5L857.7 317.5M858.3 319.5L859.7 319.5M862.3 316.0L863.7 316.0M868.3 315.5L869.7 315.5M870.8 295.5L872.2 295.5M872.3 297.0L873.7 297.0M880.8 292.5L882.2 292.5M885.8 287.0L887.2 287.0M889.3 287.0L890.7 287.0M897.3 279.0L898.7 279.0M899.3 281.0L900.7 281.0M901.3 284.5L902.7 284.5M905.3 277.0L906.7 277.0M907.3 278.0L908.7 278.0M911.3 281.5L912.7 281.5M913.3 284.0L914.7 284.0M914.3 286.0L915.7 286.0M921.3 295.0L922.7 295.0M924.8 298.0L926.2 298.0M926.3 303.0L927.7 303.0M931.8 307.0L933.2 307.0M934.3 311.5L935.7 311.5M936.3 312.0L937.7 312.0M939.8 311.5L941.2 311.5M945.3 304.5L946.7 304.5M952.8 315.0L954.2 315.0M963.3 309.0L964.7 309.0M973.8 300.0L975.2 300.0M993.8 285.0L995.2 285.0M1013.8 289.0L1015.2 289.0M1018.8 294.0L1020.2 294.0M1044.3 295.5L1045.7 295.5M1053.3 292.5L1054.7 292.5M1068.8 293.0L1070.2 293.0M1091.3 279.5L1092.7 279.5M1094.3 278.0L1095.7 278.0M1105.8 276.5L1107.2 276.5M1109.8 276.5L1111.2 276.5M1112.8 273.0L1114.2 273.0M1140.3 279.5L1141.7 279.5M1225.8 285.5L1227.2 285.5" stroke="#0a84ff" stroke-width="1.4" fill="none" stroke-linecap="butt"/>
<path d="M14.0 448.0L15.5 448.0M16.0 447.0L16.0 451.0M29.5 459.8L30.5 459.8M30.5 459.2L31.5 459.2M47.0 453.5L48.0 453.5M48.0 454.3L49.0 454.3M50.0 453.7L51.0 453.7M64.0 447.0L65.0 447.0M99.5 435.0L101.0 435.0M101.0 433.5L102.0 433.5M102.0 432.5L103.0 432.5M103.0 431.0L104.5 431.0M123.0 447.0L124.0 447.0M124.0 446.0L125.0 446.0M125.6 445.5L125.6 443.2M132.0 438.4L133.0 438.4M135.0 434.2L136.0 434.2M137.0 430.5L138.0 430.5M140.8 429.5L140.8 425.5M142.2 425.5L142.2 422.0M144.5 422.5L144.5 418.8M147.0 413.5L148.0 413.5M148.0 412.0L149.0 412.0M156.0 412.0L157.0 412.0M158.0 408.6L159.0 408.6M150.0 410.2L151.0 410.2M157.5 413.0L157.5 410.5M158.5 410.5L158.5 408.0M161.0 405.9L162.0 405.9M169.0 408.2L170.0 408.2M170.0 406.8L171.0 406.8M175.0 409.1L176.0 409.1M186.0 410.0L187.0 410.0M188.0 407.6L189.0 407.6M189.5 407.0L189.5 404.5M190.5 404.5L190.5 402.0M196.0 401.2L197.0 401.2M201.0 407.8L202.0 407.8M202.0 407.2L203.0 407.2M206.0 408.8L207.0 408.8M210.0 410.9L211.0 410.9M211.0 409.2L212.0 409.2M212.0 407.8L213.0 407.8M224.0 430.1L225.2 430.1M225.2 428.4L226.5 428.4M226.5 426.6L227.7 426.6M228.8 422.9L230.0 422.9M231.0 419.2L232.0 419.2M233.8 416.5L233.8 413.5M238.2 419.5L238.2 423.5M241.0 423.0L242.0 423.0M242.0 421.0L243.0 421.0M243.8 420.0L243.8 416.5M263.0 426.9L264.0 426.9M266.3 424.8L267.5 424.8M272.5 435.5L272.5 430.5M273.0 429.5L274.0 429.5M295.0 429.6L296.0 429.6M297.5 425.5L297.5 421.5M298.5 421.5L298.5 418.2M299.5 418.2L299.5 415.0M304.5 415.2L304.5 413.0M308.0 419.0L309.0 419.0M347.2 427.2L348.3 427.2M352.5 429.0L352.5 424.0M357.0 422.2L358.0 422.2M358.0 421.4L359.0 421.4M359.0 420.6L360.0 420.6M361.0 418.6L362.0 418.6M363.5 416.0L363.5 413.0M375.0 414.0L376.5 414.0M384.0 414.4L385.0 414.4M385.0 413.1L386.0 413.1M390.5 413.2L391.5 413.2M419.5 432.0L420.5 432.0M425.5 431.2L426.5 431.2M434.0 428.0L435.5 428.0M440.0 422.5L440.0 416.5M441.0 416.5L441.0 414.2M442.0 414.2L442.0 412.0M444.5 410.0L446.0 410.0M446.0 408.6L447.0 408.6M454.0 413.0L455.0 413.0M456.5 411.5L456.5 408.5M457.0 408.2L458.0 408.2M466.0 403.8L467.0 403.8M473.5 399.2L473.5 397.0M477.0 394.0L478.0 394.0M478.8 393.5L478.8 390.5M488.0 357.0L489.0 357.0M490.0 358.9L491.0 358.9M493.0 363.6L494.0 363.6M494.0 361.9L495.0 361.9M498.0 358.4L499.0 358.4M500.0 356.5L501.0 356.5M512.0 357.5L513.0 357.5M517.5 361.2L518.8 361.2M518.8 359.8L520.0 359.8M522.0 355.0L523.5 355.0M527.4 356.8L527.4 354.0M529.0 353.2L530.0 353.2M535.0 351.1L536.0 351.1M547.0 366.9L548.0 366.9M548.0 365.6L549.0 365.6M557.5 363.0L557.5 360.8M565.5 358.5L565.5 355.5M566.5 355.5L566.5 350.0M567.5 350.0L567.5 342.5M574.2 345.9L575.5 345.9M581.8 347.7L583.0 347.7M590.5 348.8L590.5 346.5M596.5 354.0L597.8 354.0M597.8 352.0L599.0 352.0M602.0 352.0L603.0 352.0M604.5 354.0L604.5 349.5M616.0 353.0L617.0 353.0M617.0 351.0L618.0 351.0M618.0 349.9L619.0 349.9M627.5 347.5L627.5 342.0M634.5 341.8L634.5 339.5M635.0 339.2L636.0 339.2M645.0 341.8L646.0 341.8M654.5 337.2L654.5 335.0M655.0 335.0L656.0 335.0M665.0 335.1L666.0 335.1M666.0 334.4L667.0 334.4M667.0 333.1L668.0 333.1M671.5 333.0L671.5 327.5M677.5 336.5L677.5 334.0M678.5 334.0L678.5 331.5M683.0 339.0L684.0 339.0M689.1 339.5L689.1 336.8M690.4 336.8L690.4 334.0M698.0 336.5L699.0 336.5M702.0 333.2L703.0 333.2M704.5 332.5L704.5 329.5M723.5 354.0L723.5 356.5M724.5 356.5L724.5 353.0M729.5 356.5L729.5 348.5M736.0 346.9L737.0 346.9M737.0 345.4L738.0 345.4M753.5 349.7L753.5 347.3M754.5 347.3L754.5 345.0M755.5 345.0L755.5 342.8M757.8 340.5L757.8 337.0M767.0 342.4L768.0 342.4M772.0 331.6L773.0 331.6M773.0 329.9L774.0 329.9M775.0 330.1L776.0 330.1M777.0 329.4L778.0 329.4M782.0 328.5L783.0 328.5M785.0 328.9L786.0 328.9M791.5 330.5L791.5 328.2M792.5 328.2L792.5 326.0M795.8 327.5L795.8 321.5M797.2 321.5L797.2 319.0M810.5 335.5L810.5 333.0M811.5 333.0L811.5 330.5M828.5 334.5L828.5 331.2M830.8 328.0L830.8 325.5M843.0 330.6L844.0 330.6M846.0 325.1L847.0 325.1M847.0 323.4L848.0 323.4M848.8 322.5L848.8 319.0M852.0 316.2L853.0 316.2M859.0 318.9L860.0 318.9M860.0 317.6L861.0 317.6M862.0 316.2L863.0 316.2M867.0 317.8L868.0 317.8M868.0 316.2L869.0 316.2M869.5 315.5L869.5 304.5M870.8 304.5L870.8 295.5M874.0 296.2L875.0 296.2M875.8 296.0L875.8 288.5M877.2 288.5L877.2 285.0M879.0 286.9L880.0 286.9M883.5 284.0L884.5 284.0M884.5 282.0L885.5 282.0M886.5 286.2L888.0 286.2M890.0 286.8L891.0 286.8M893.5 285.0L895.0 285.0M903.0 281.9L904.0 281.9M905.0 278.0L906.0 278.0M924.0 297.0L925.5 297.0M929.8 306.5L929.8 303.5M937.0 311.2L938.0 311.2M938.0 309.8L939.0 309.8M941.2 311.5L941.2 308.0M942.0 307.0L943.0 307.0M943.0 305.0L944.0 305.0M959.5 318.0L959.5 313.5M960.0 313.1L961.0 313.1M962.5 312.0L962.5 307.0M964.6 309.0L964.6 306.3M966.9 303.7L966.9 301.0M984.0 299.2L985.2 299.2M985.2 297.8L986.5 297.8M988.8 299.0L988.8 296.0M991.5 294.0L991.5 291.0M992.6 291.0L992.6 288.0M995.8 284.2L997.0 284.2M999.0 284.6L1000.0 284.6M1000.0 282.9L1001.0 282.9M1001.5 282.0L1001.5 286.0M1003.0 284.5L1004.0 284.5M1005.0 282.5L1006.0 282.5M1010.0 284.2L1011.0 284.2M1011.0 282.8L1012.0 282.8M1016.0 291.2L1017.0 291.2M1017.0 289.8L1018.0 289.8M1022.0 298.8L1023.2 298.8M1024.5 297.0L1026.0 297.0M1035.5 297.5L1036.8 297.5M1039.5 293.0L1039.5 290.8M1040.5 290.8L1040.5 288.5M1043.5 290.5L1043.5 288.0M1054.5 292.5L1054.5 290.0M1057.0 288.3L1058.0 288.3M1060.5 294.0L1060.5 297.0M1071.0 294.5L1071.0 289.5M1072.0 289.5L1072.0 285.5M1074.0 281.5L1074.0 279.2M1075.0 279.2L1075.0 277.0M1086.2 284.0L1086.2 277.0M1092.0 279.2L1093.0 279.2M1093.0 278.8L1094.0 278.8M1103.5 274.2L1104.5 274.2M1104.5 273.8L1105.5 273.8M1107.5 275.0L1108.5 275.0M1108.5 274.0L1109.5 274.0M1110.5 276.4L1111.5 276.4M1127.0 276.0L1128.0 276.0M1129.5 279.0L1129.5 275.5M1137.3 273.7L1138.5 273.7M1157.8 275.2L1159.0 275.2M1172.0 281.5L1173.0 281.5M1174.0 279.5L1175.0 279.5M1175.8 279.0L1175.8 275.0M1177.2 275.0L1177.2 272.0M1214.2 283.0L1214.2 279.0M1228.5 284.0L1229.5 284.0M30.8 459.0L32.2 459.0M50.3 453.5L51.7 453.5M89.3 453.5L90.7 453.5M98.8 436.0L100.2 436.0M100.3 434.0L101.7 434.0M117.3 450.0L118.7 450.0M124.3 445.5L125.7 445.5M126.8 441.0L128.2 441.0M128.3 439.5L129.7 439.5M133.3 436.5L134.7 436.5M139.3 429.5L140.7 429.5M140.8 425.5L142.2 425.5M142.3 422.0L143.7 422.0M145.3 415.0L146.7 415.0M149.3 409.0L150.7 409.0M155.3 413.0L156.7 413.0M157.3 409.0L158.7 409.0M149.3 409.5L150.7 409.5M156.3 413.0L157.7 413.0M158.3 408.0L159.7 408.0M174.3 409.5L175.7 409.5M176.3 408.0L177.7 408.0M184.3 411.5L185.7 411.5M190.3 402.0L191.7 402.0M192.3 400.0L193.7 400.0M202.3 407.0L203.7 407.0M210.3 410.0L211.7 410.0M212.3 407.0L213.7 407.0M218.3 415.0L219.7 415.0M225.8 427.5L227.2 427.5M232.3 416.5L233.7 416.5M235.3 417.5L236.7 417.5M242.3 420.0L243.7 420.0M263.3 426.5L264.7 426.5M272.3 430.5L273.7 430.5M285.8 426.0L287.2 426.0M291.8 425.5L293.2 425.5M295.3 429.5L296.7 429.5M297.3 421.5L298.7 421.5M299.3 415.0L300.7 415.0M304.3 413.0L305.7 413.0M307.3 419.5L308.7 419.5M311.3 422.5L312.7 422.5M352.3 424.0L353.7 424.0M360.3 419.5L361.7 419.5M362.3 416.0L363.7 416.0M375.8 413.0L377.2 413.0M379.8 416.0L381.2 416.0M385.3 412.5L386.7 412.5M410.3 425.0L411.7 425.0M419.8 431.5L421.2 431.5M439.8 416.5L441.2 416.5M441.8 412.0L443.2 412.0M445.3 409.0L446.7 409.0M456.3 408.5L457.7 408.5M458.3 407.5L459.7 407.5M473.3 397.0L474.7 397.0M475.3 395.5L476.7 395.5M477.3 393.5L478.7 393.5M480.8 355.5L482.2 355.5M486.3 357.0L487.7 357.0M490.3 359.5L491.7 359.5M496.3 361.0L497.7 361.0M498.3 357.5L499.7 357.5M519.3 359.0L520.7 359.0M521.3 356.0L522.7 356.0M522.8 354.0L524.2 354.0M527.3 354.0L528.7 354.0M537.3 354.0L538.7 354.0M542.3 361.5L543.7 361.5M554.3 363.0L555.7 363.0M565.3 355.5L566.7 355.5M566.3 350.0L567.7 350.0M567.3 342.5L568.7 342.5M576.3 346.5L577.7 346.5M617.3 350.0L618.7 350.0M621.3 352.0L622.7 352.0M626.3 347.5L627.7 347.5M627.3 342.0L628.7 342.0M634.3 339.5L635.7 339.5M654.3 335.0L655.7 335.0M662.3 335.5L663.7 335.5M670.3 333.0L671.7 333.0M673.3 332.5L674.7 332.5M678.3 331.5L679.7 331.5M682.3 340.0L683.7 340.0M697.3 337.0L698.7 337.0M704.3 329.5L705.7 329.5M723.3 356.5L724.7 356.5M729.3 348.5L730.7 348.5M736.3 346.0L737.7 346.0M741.3 343.5L742.7 343.5M746.8 348.5L748.2 348.5M754.3 345.0L755.7 345.0M767.3 341.5L768.7 341.5M768.3 336.5L769.7 336.5M773.3 329.0L774.7 329.0M775.3 330.5L776.7 330.5M785.3 329.0L786.7 329.0M790.3 330.5L791.7 330.5M792.3 326.0L793.7 326.0M795.8 321.5L797.2 321.5M798.8 322.5L800.2 322.5M809.3 335.5L810.7 335.5M827.3 334.5L828.7 334.5M829.3 328.0L830.7 328.0M830.8 325.5L832.2 325.5M842.3 331.5L843.7 331.5M847.3 322.5L848.7 322.5M848.8 319.0L850.2 319.0M860.3 317.0L861.7 317.0M866.3 318.5L867.7 318.5M869.3 304.5L870.7 304.5M874.3 296.0L875.7 296.0M875.8 288.5L877.2 288.5M882.8 285.0L884.2 285.0M887.3 285.5L888.7 285.5M891.3 286.0L892.7 286.0M892.8 286.0L894.2 286.0M895.8 278.5L897.2 278.5M909.3 277.0L910.7 277.0M916.8 291.5L918.2 291.5M923.3 296.0L924.7 296.0M928.3 306.5L929.7 306.5M938.3 309.0L939.7 309.0M943.3 304.0L944.7 304.0M954.8 314.5L956.2 314.5M959.3 313.5L960.7 313.5M961.3 312.0L962.7 312.0M962.3 307.0L963.7 307.0M966.8 301.0L968.2 301.0M975.8 303.0L977.2 303.0M985.8 297.0L987.2 297.0M991.3 291.0L992.7 291.0M996.3 284.0L997.7 284.0M1003.3 284.0L1004.7 284.0M1023.8 298.0L1025.2 298.0M1034.8 298.0L1036.2 298.0M1038.3 293.0L1039.7 293.0M1040.3 288.5L1041.7 288.5M1057.3 288.0L1058.7 288.0M1070.8 289.5L1072.2 289.5M1072.8 281.5L1074.2 281.5M1074.8 277.0L1076.2 277.0M1084.8 284.0L1086.2 284.0M1086.3 277.0L1087.7 277.0M1102.8 274.5L1104.2 274.5M1104.8 273.5L1106.2 273.5M1108.8 273.5L1110.2 273.5M1129.3 275.5L1130.7 275.5M1177.3 272.0L1178.7 272.0M1227.8 285.0L1229.2 285.0" stroke="#ff0000" stroke-width="1.4" fill="none" stroke-linecap="butt"/>
<path d="M112.0 440.0L112.0 445.0M388.5 411.0L388.5 417.5M752.0 348.5L752.0 355.0" stroke="#f0e264" stroke-width="1.3" fill="none"/>
<path d="M17.5 453.5L17.5 459.5M104.5 425.5L104.5 434.5M110.0 440.0L110.0 446.5M116.0 443.0L116.0 457.0M179.0 410.0L179.0 414.5M199.0 398.0L199.0 404.5M209.0 412.0L209.0 417.0M217.0 411.0L217.0 420.0M221.0 419.0L221.0 427.0M224.0 428.0L224.0 434.5M225.0 428.0L225.0 434.5M234.5 410.0L234.5 417.5M239.0 421.5L239.0 425.0M270.0 428.0L270.0 434.0M294.0 426.5L294.0 433.0M435.5 421.5L435.5 433.0M479.5 386.0L479.5 394.5M489.0 352.0L489.0 361.5M493.0 362.0L493.0 369.0M506.0 355.0L506.0 362.5M507.0 355.0L507.0 362.5M547.0 365.5L547.0 372.5M583.0 345.0L583.0 351.0M584.0 345.0L584.0 351.0M595.0 346.0L595.0 353.5M596.5 350.0L596.5 357.5M657.0 332.0L657.0 337.0M677.0 335.0L677.0 339.0M678.0 335.0L678.0 339.0M706.5 334.0L706.5 337.5M717.5 342.0L717.5 346.0M718.5 347.0L718.5 350.5M719.5 347.0L719.5 350.5M728.0 345.5L728.0 350.5M729.0 345.5L729.0 350.5M762.0 339.0L762.0 349.0M780.0 324.0L780.0 331.5M808.0 328.0L808.0 334.0M857.0 314.0L857.0 320.5M858.0 314.0L858.0 320.5M871.5 294.0L871.5 299.0M872.5 294.0L872.5 299.0M881.5 289.0L881.5 296.0M922.0 291.5L922.0 298.5M925.5 294.0L925.5 301.5M1014.5 285.5L1014.5 292.5" stroke="#0a84ff" stroke-width="1.3" fill="none"/>
<path d="M31.5 457.0L31.5 461.0M51.0 452.0L51.0 456.0M99.5 432.5L99.5 438.5M100.5 432.5L100.5 438.5M125.0 443.0L125.0 448.5M146.0 412.0L146.0 419.0M177.0 405.0L177.0 411.0M213.0 405.0L213.0 410.0M226.5 424.0L226.5 431.5M227.5 424.0L227.5 431.5M273.0 428.0L273.0 433.0M298.0 417.5L298.0 425.0M353.0 420.5L353.0 428.0M380.5 413.5L380.5 418.0M440.5 411.0L440.5 420.5M481.5 352.0L481.5 359.0M568.0 338.0L568.0 347.0M663.0 334.0L663.0 337.5M664.0 334.0L664.0 337.5M730.0 345.0L730.0 352.0M731.0 345.0L731.0 352.0M755.0 342.0L755.0 348.0M776.0 327.0L776.0 334.0M796.5 316.5L796.5 325.5M799.5 319.0L799.5 326.5M828.0 331.0L828.0 340.5M843.0 328.0L843.0 334.5M849.5 315.0L849.5 326.5M870.0 296.5L870.0 312.5M871.0 296.5L871.0 312.5M876.5 284.0L876.5 292.5M883.5 282.0L883.5 288.5M888.0 283.0L888.0 289.0M893.5 283.5L893.5 289.0M906.0 273.0L906.0 279.0M939.0 307.0L939.0 311.5M967.5 298.5L967.5 303.5M976.5 301.0L976.5 306.0M1004.0 282.0L1004.0 286.0M1071.5 285.0L1071.5 293.5M1073.5 277.0L1073.5 285.5M1075.5 275.5L1075.5 278.5M1087.0 270.0L1087.0 283.5M1088.0 270.0L1088.0 283.5M1103.5 273.0L1103.5 276.5M1228.5 281.5L1228.5 289.0" stroke="#ff0000" stroke-width="1.3" fill="none"/>
<path d="M6.5 259.7V471.9H1235.5V259.7" fill="none" stroke="#f4f4f4" stroke-width="1.25"/>
<line x1="5.9" y1="259.7" x2="1236.1" y2="259.7" stroke="#c8c8c8" stroke-width="1.8"/>
<text transform="scale(0.72,1)" x="1280.83 1289.72" y="465.70" fill="#e4e4e4" text-anchor="middle" font-family="'Liberation Sans',sans-serif" font-size="13.6">01</text>
<text transform="scale(0.72,1)" x="58.61 67.50" y="482.00" fill="#e4e4e4" text-anchor="middle" font-family="'Liberation Sans',sans-serif" font-size="13.6">04</text>
<text transform="scale(0.72,1)" x="116.94 125.83" y="482.00" fill="#e4e4e4" text-anchor="middle" font-family="'Liberation Sans',sans-serif" font-size="13.6">05</text>
<text transform="scale(0.72,1)" x="162.78 171.67" y="482.00" fill="#e4e4e4" text-anchor="middle" font-family="'Liberation Sans',sans-serif" font-size="13.6">09</text>
<text transform="scale(0.72,1)" x="248.89 257.78" y="482.00" fill="#e4e4e4" text-anchor="middle" font-family="'Liberation Sans',sans-serif" font-size="13.6">10</text>
<text transform="scale(0.72,1)" x="333.61 342.50" y="482.00" fill="#e4e4e4" text-anchor="middle" font-family="'Liberation Sans',sans-serif" font-size="13.6">11</text>
<text transform="scale(0.72,1)" x="414.17 423.06" y="482.00" fill="#e4e4e4" text-anchor="middle" font-family="'Liberation Sans',sans-serif" font-size="13.6">12</text>
<text transform="scale(0.72,1)" x="496.11 505.00" y="482.00" fill="#e4e4e4" text-anchor="middle" font-family="'Liberation Sans',sans-serif" font-size="13.6">13</text>
<text transform="scale(0.72,1)" x="572.50 581.39" y="482.00" fill="#e4e4e4" text-anchor="middle" font-family="'Liberation Sans',sans-serif" font-size="13.6">14</text>
<text transform="scale(0.72,1)" x="672.50 681.39" y="482.00" fill="#e4e4e4" text-anchor="middle" font-family="'Liberation Sans',sans-serif" font-size="13.6">16</text>
<text transform="scale(0.72,1)" x="715.56 724.44" y="482.00" fill="#e4e4e4" text-anchor="middle" font-family="'Liberation Sans',sans-serif" font-size="13.6">17</text>
<text transform="scale(0.72,1)" x="797.50 806.39" y="482.00" fill="#e4e4e4" text-anchor="middle" font-family="'Liberation Sans',sans-serif" font-size="13.6">18</text>
<text transform="scale(0.72,1)" x="872.50 881.39" y="482.00" fill="#e4e4e4" text-anchor="middle" font-family="'Liberation Sans',sans-serif" font-size="13.6">19</text>
<text transform="scale(0.72,1)" x="950.28 959.17" y="482.00" fill="#e4e4e4" text-anchor="middle" font-family="'Liberation Sans',sans-serif" font-size="13.6">20</text>
<text transform="scale(0.72,1)" x="1028.06 1036.94" y="482.00" fill="#e4e4e4" text-anchor="middle" font-family="'Liberation Sans',sans-serif" font-size="13.6">21</text>
<text transform="scale(0.72,1)" x="1111.39 1120.28" y="482.00" fill="#e4e4e4" text-anchor="middle" font-family="'Liberation Sans',sans-serif" font-size="13.6">22</text>
<text transform="scale(0.72,1)" x="1196.11 1205.00" y="482.00" fill="#e4e4e4" text-anchor="middle" font-family="'Liberation Sans',sans-serif" font-size="13.6">23</text>
<text transform="scale(0.72,1)" x="1280.83 1289.72" y="482.00" fill="#e4e4e4" text-anchor="middle" font-family="'Liberation Sans',sans-serif" font-size="13.6">00</text>
<text transform="scale(0.72,1)" x="1365.56 1374.44" y="482.00" fill="#e4e4e4" text-anchor="middle" font-family="'Liberation Sans',sans-serif" font-size="13.6">01</text>
<text transform="scale(0.72,1)" x="1451.67 1460.56" y="482.00" fill="#e4e4e4" text-anchor="middle" font-family="'Liberation Sans',sans-serif" font-size="13.6">02</text>
<text transform="scale(0.72,1)" x="1535.00 1543.89" y="482.00" fill="#e4e4e4" text-anchor="middle" font-family="'Liberation Sans',sans-serif" font-size="13.6">03</text>
<text transform="scale(0.72,1)" x="1615.56 1624.44" y="482.00" fill="#e4e4e4" text-anchor="middle" font-family="'Liberation Sans',sans-serif" font-size="13.6">04</text>
<text transform="scale(0.72,1)" x="1686.39 1695.28" y="482.00" fill="#e4e4e4" text-anchor="middle" font-family="'Liberation Sans',sans-serif" font-size="13.6">05</text>
<text transform="scale(0.72,1)" x="120.28 129.17" y="482.00" fill="#e4e4e4" text-anchor="middle" font-family="'Liberation Sans',sans-serif" font-size="13.6">08</text>
<text transform="scale(0.72,1)" x="636.11 645.00" y="482.00" fill="#e4e4e4" text-anchor="middle" font-family="'Liberation Sans',sans-serif" font-size="13.6">15</text>
<text transform="scale(0.72,1)" x="1720.87 1729.55 1738.23 1746.91 1755.59" y="274.90" fill="#e4e4e4" text-anchor="middle" font-family="'Liberation Sans',sans-serif" font-size="13.6">4,225</text>
<text transform="scale(0.72,1)" x="1720.87 1729.55 1738.23 1746.91 1755.59" y="309.80" fill="#e4e4e4" text-anchor="middle" font-family="'Liberation Sans',sans-serif" font-size="13.6">4,200</text>
<text transform="scale(0.72,1)" x="1720.87 1729.55 1738.23 1746.91 1755.59" y="344.80" fill="#e4e4e4" text-anchor="middle" font-family="'Liberation Sans',sans-serif" font-size="13.6">4,175</text>
<text transform="scale(0.72,1)" x="1720.87 1729.55 1738.23 1746.91 1755.59" y="379.90" fill="#e4e4e4" text-anchor="middle" font-family="'Liberation Sans',sans-serif" font-size="13.6">4,150</text>
<text transform="scale(0.72,1)" x="1720.87 1729.55 1738.23 1746.91 1755.59" y="414.90" fill="#e4e4e4" text-anchor="middle" font-family="'Liberation Sans',sans-serif" font-size="13.6">4,125</text>
<text transform="scale(0.72,1)" x="1720.87 1729.55 1738.23 1746.91 1755.59" y="451.10" fill="#e4e4e4" text-anchor="middle" font-family="'Liberation Sans',sans-serif" font-size="13.6">4,100</text>
<text transform="scale(0.72,1)" x="1720.87 1729.55 1738.23 1746.91 1755.59" y="486.20" fill="#e4e4e4" text-anchor="middle" font-family="'Liberation Sans',sans-serif" font-size="13.6">4,075</text>
<rect x="1236" y="273.0" width="58.6" height="21.4" fill="#d4d4d4"/>
<rect x="1236" y="273.0" width="58.6" height="1.3" fill="#e6e6e6"/>
<rect x="1236" y="293.1" width="58.6" height="1.3" fill="#e2e2e2"/>
<text transform="scale(0.8,1)" x="1565.06 1573.19 1581.31 1589.44 1597.56" y="286.90" fill="#000" text-anchor="middle" font-family="'Liberation Sans',sans-serif" font-size="13.6" font-weight="bold">4,221</text>
<rect x="6" y="492.2" width="1289" height="193.8" fill="#1a1a1a"/>
<rect x="6.5" y="493.0" width="1229.0" height="177.5" fill="#000"/>
<line x1="7" y1="529.5" x2="1235" y2="529.5" stroke="#c8c8c8" stroke-width="1" stroke-dasharray="1 1"/>
<line x1="7" y1="587.5" x2="1235" y2="587.5" stroke="#c8c8c8" stroke-width="1" stroke-dasharray="1 1"/>
<line x1="7" y1="645.5" x2="1235" y2="645.5" stroke="#c8c8c8" stroke-width="1" stroke-dasharray="1 1"/>
<line x1="38.5" y1="494" x2="38.5" y2="670" stroke="#c8c8c8" stroke-width="1" stroke-dasharray="1 1"/>
<line x1="80.5" y1="494" x2="80.5" y2="670" stroke="#c8c8c8" stroke-width="1" stroke-dasharray="1 1"/>
<line x1="98.5" y1="494" x2="98.5" y2="670" stroke="#c8c8c8" stroke-width="1" stroke-dasharray="1 1"/>
<line x1="113.5" y1="494" x2="113.5" y2="670" stroke="#c8c8c8" stroke-width="1" stroke-dasharray="1 1"/>
<line x1="175.5" y1="494" x2="175.5" y2="670" stroke="#c8c8c8" stroke-width="1" stroke-dasharray="1 1"/>
<line x1="236.5" y1="494" x2="236.5" y2="670" stroke="#c8c8c8" stroke-width="1" stroke-dasharray="1 1"/>
<line x1="294.5" y1="494" x2="294.5" y2="670" stroke="#c8c8c8" stroke-width="1" stroke-dasharray="1 1"/>
<line x1="353.5" y1="494" x2="353.5" y2="670" stroke="#c8c8c8" stroke-width="1" stroke-dasharray="1 1"/>
<line x1="408.5" y1="494" x2="408.5" y2="670" stroke="#c8c8c8" stroke-width="1" stroke-dasharray="1 1"/>
<line x1="469.5" y1="494" x2="469.5" y2="670" stroke="#c8c8c8" stroke-width="1" stroke-dasharray="1 1"/>
<line x1="480.5" y1="494" x2="480.5" y2="670" stroke="#c8c8c8" stroke-width="1" stroke-dasharray="1 1"/>
<line x1="511.5" y1="494" x2="511.5" y2="670" stroke="#c8c8c8" stroke-width="1" stroke-dasharray="1 1"/>
<line x1="570.5" y1="494" x2="570.5" y2="670" stroke="#c8c8c8" stroke-width="1" stroke-dasharray="1 1"/>
<line x1="624.5" y1="494" x2="624.5" y2="670" stroke="#c8c8c8" stroke-width="1" stroke-dasharray="1 1"/>
<line x1="680.5" y1="494" x2="680.5" y2="670" stroke="#c8c8c8" stroke-width="1" stroke-dasharray="1 1"/>
<line x1="736.5" y1="494" x2="736.5" y2="670" stroke="#c8c8c8" stroke-width="1" stroke-dasharray="1 1"/>
<line x1="796.5" y1="494" x2="796.5" y2="670" stroke="#c8c8c8" stroke-width="1" stroke-dasharray="1 1"/>
<line x1="856.5" y1="494" x2="856.5" y2="670" stroke="#c8c8c8" stroke-width="1" stroke-dasharray="1 1"/>
<line x1="917.5" y1="494" x2="917.5" y2="670" stroke="#c8c8c8" stroke-width="1" stroke-dasharray="1 1"/>
<line x1="978.5" y1="494" x2="978.5" y2="670" stroke="#c8c8c8" stroke-width="1" stroke-dasharray="1 1"/>
<line x1="1040.5" y1="494" x2="1040.5" y2="670" stroke="#c8c8c8" stroke-width="1" stroke-dasharray="1 1"/>
<line x1="1100.5" y1="494" x2="1100.5" y2="670" stroke="#c8c8c8" stroke-width="1" stroke-dasharray="1 1"/>
<line x1="1158.5" y1="494" x2="1158.5" y2="670" stroke="#c8c8c8" stroke-width="1" stroke-dasharray="1 1"/>
<line x1="1209.5" y1="494" x2="1209.5" y2="670" stroke="#c8c8c8" stroke-width="1" stroke-dasharray="1 1"/>
<text transform="scale(0.68,1)" x="15.92" y="506.00" fill="#e4e4e4" text-anchor="middle" font-family="'Liberation Sans',sans-serif" font-size="13.2">[</text>
<text x="13.95" y="506.20" fill="#e4e4e4" font-family="'IPAGothic','Noto Sans CJK JP',sans-serif" font-size="11.8" textLength="12.50" lengthAdjust="spacingAndGlyphs">金</text>
<text transform="scale(0.68,1)" x="52.68 61.88 71.07 80.26 89.45" y="506.00" fill="#e4e4e4" text-anchor="middle" font-family="'Liberation Sans',sans-serif" font-size="13.2">22/02</text>
<text transform="scale(0.68,1)" x="107.83 117.02 126.21 135.40 144.60" y="506.00" fill="#e4e4e4" text-anchor="middle" font-family="'Liberation Sans',sans-serif" font-size="13.2">6,085</text>
<text x="101.45" y="506.20" fill="#e4e4e4" font-family="'IPAGothic','Noto Sans CJK JP',sans-serif" font-size="11.8" textLength="12.50" lengthAdjust="spacingAndGlyphs">×</text>
<text transform="scale(0.68,1)" x="172.17 181.36 190.55 199.74 208.93 218.12 227.32" y="506.00" fill="#e4e4e4" text-anchor="middle" font-family="'Liberation Sans',sans-serif" font-size="13.2">1.00]-[</text>
<text x="157.70" y="506.20" fill="#e4e4e4" font-family="'IPAGothic','Noto Sans CJK JP',sans-serif" font-size="11.8" textLength="25.00" lengthAdjust="spacingAndGlyphs">白金</text>
<text transform="scale(0.68,1)" x="282.46 291.65 300.85 310.04 319.23" y="506.00" fill="#e4e4e4" text-anchor="middle" font-family="'Liberation Sans',sans-serif" font-size="13.2">22/02</text>
<text transform="scale(0.68,1)" x="337.61 346.80 355.99 365.18 374.37" y="506.00" fill="#e4e4e4" text-anchor="middle" font-family="'Liberation Sans',sans-serif" font-size="13.2">4,221</text>
<text x="257.70" y="506.20" fill="#e4e4e4" font-family="'IPAGothic','Noto Sans CJK JP',sans-serif" font-size="11.8" textLength="12.50" lengthAdjust="spacingAndGlyphs">×</text>
<text transform="scale(0.68,1)" x="401.95 411.14 420.33 429.52 438.71" y="506.00" fill="#e4e4e4" text-anchor="middle" font-family="'Liberation Sans',sans-serif" font-size="13.2">1.00]</text>
<text x="307.70" y="506.20" fill="#e4e4e4" font-family="'IPAGothic','Noto Sans CJK JP',sans-serif" font-size="11.8" textLength="25.00" lengthAdjust="spacingAndGlyphs">終値</text>
<text x="338.95" y="506.20" fill="#e4e4e4" font-family="'IPAGothic','Noto Sans CJK JP',sans-serif" font-size="11.8" textLength="25.00" lengthAdjust="spacingAndGlyphs">時刻</text>
<text transform="scale(0.68,1)" x="539.82 549.01 558.20 567.39 576.58 585.77" y="506.00" fill="#e4e4e4" text-anchor="middle" font-family="'Liberation Sans',sans-serif" font-size="13.2">:05:30</text>
<text transform="scale(0.68,1)" x="604.15 613.35 622.54 631.73 640.92" y="506.00" fill="#e4e4e4" text-anchor="middle" font-family="'Liberation Sans',sans-serif" font-size="13.2">1,864</text>
<path d="M8.0 519.0L11.0 518.5L14.0 519.5L16.0 523.5L17.5 517.0L19.0 508.0L20.0 503.5L22.5 505.0L24.5 502.0L26.0 503.5L27.5 511.5L29.5 506.0L31.5 506.5L32.5 511.0L34.5 508.5L36.5 509.5L39.0 513.0L41.5 512.0L46.0 512.0L48.0 520.0L50.0 514.0L51.5 518.0L53.5 514.0L55.0 513.0L57.0 509.0L58.5 517.0L60.0 519.0L63.0 519.0L65.5 520.5L67.5 519.5L69.5 514.0L71.0 512.0L74.0 511.0L76.5 507.0L78.0 505.5L79.5 508.0L80.5 516.0L82.5 511.0L84.5 513.5L86.5 512.0L90.0 512.0L93.0 511.0L95.0 508.0L97.0 503.0L98.5 509.0L99.5 520.0L100.5 530.0L102.0 537.0L103.5 534.0L105.5 535.0L107.0 529.0L108.5 526.5L110.0 517.0L111.0 524.0L112.5 522.0L114.0 517.0L115.5 513.0L117.0 507.5L119.0 510.0L121.0 512.0L124.0 512.5L126.0 516.0L128.0 518.5L129.5 524.5L131.0 520.0L133.5 522.5L136.0 526.0L138.0 532.0L139.5 529.0L141.0 530.5L142.5 540.5L145.0 541.0L147.0 548.0L149.0 543.0L151.0 547.0L152.0 546.0L154.0 540.0L156.0 541.5L158.0 544.5L160.0 550.5L161.5 553.5L163.5 549.0L166.0 548.0L168.0 548.0L170.0 541.5L172.0 546.0L174.0 544.0L176.0 542.0L177.5 530.0L179.0 527.0L180.5 534.0L182.0 543.0L183.5 541.0L185.5 546.0L187.5 546.0L189.5 543.0L191.0 552.0L192.5 558.0L194.5 562.0L196.5 561.5L198.0 557.0L200.5 556.5L203.0 558.0L205.0 562.0L206.5 557.5L208.5 564.0L210.0 550.0L211.0 565.0L212.0 555.0L213.0 568.0L214.5 560.0L215.0 572.0L216.0 555.0L218.0 553.0L219.5 559.0L220.5 552.0L222.0 549.0L224.5 543.5L226.5 550.0L229.0 551.0L232.0 550.5L234.0 557.5L236.5 552.5L238.5 546.0L240.0 543.5L242.5 546.0L245.0 548.0L247.0 551.5L249.0 543.5L251.0 546.5L254.5 546.5L256.0 542.0L258.5 540.5L261.5 535.0L263.0 535.5L264.5 541.5L267.0 546.5L269.0 549.0L271.0 541.0L273.0 532.5L274.5 539.5L276.5 540.0L278.5 548.0L281.0 549.0L283.5 551.5L286.0 547.5L288.5 551.0L290.0 553.5L292.5 547.5L294.0 540.0L295.0 534.0L297.0 538.0L299.0 539.5L300.5 544.5L302.0 543.0L304.0 540.5L305.5 550.5L307.0 551.0L308.5 538.5L310.0 536.0L312.0 540.0L314.0 541.5L316.0 536.0L318.0 535.0L319.0 539.0L320.0 534.5L322.0 539.5L323.5 537.5L325.0 541.5L327.0 542.0L328.0 544.5L329.0 534.0L331.0 530.5L333.0 530.5L334.5 528.0L336.0 531.0L338.0 527.5L340.0 527.5L342.0 527.5L344.5 524.5L347.0 525.0L349.0 525.5L350.5 528.0L352.5 525.0L354.0 534.5L356.5 534.0L358.5 537.0L360.5 540.5L362.0 545.5L363.5 551.5L365.0 549.5L367.0 550.5L369.0 549.5L370.5 551.5L372.5 548.0L374.5 545.5L376.0 548.0L377.5 546.0L378.5 551.5L380.0 551.0L382.0 548.0L384.5 548.0L386.5 551.5L388.5 550.0L390.0 547.5L393.0 547.5L395.0 545.0L397.0 545.5L398.5 540.5L401.0 536.5L402.5 534.5L405.5 534.5L408.0 537.5L410.0 533.5L413.0 532.0L415.0 530.0L416.5 522.0L418.5 525.0L420.5 522.5L422.0 524.5L424.5 523.0L427.5 519.0L430.0 522.0L431.0 523.5L432.5 521.0L435.0 524.5L436.5 523.0L438.0 530.5L440.0 525.5L442.0 531.5L444.5 533.0L446.5 538.0L449.0 541.5L451.0 536.0L452.0 535.5L454.5 536.0L456.5 541.0L459.0 541.0L461.5 540.0L463.5 536.0L466.0 535.5L468.5 537.0L470.5 544.5L473.0 540.0L475.5 540.5L477.5 543.0L479.0 540.0L479.5 554.0L481.0 553.0L482.0 612.0L484.0 613.0L486.0 616.0L487.0 618.5L488.5 627.0L490.5 620.0L492.5 608.5L494.5 604.0L496.0 614.5L498.5 612.0L500.5 620.5L503.5 622.5L505.5 607.5L507.5 614.0L509.0 608.0L511.0 608.5L512.5 618.0L515.0 619.0L518.0 617.0L519.5 626.0L521.0 633.0L523.0 628.0L525.0 629.0L526.5 624.0L528.0 630.0L528.5 636.0L530.0 633.0L533.0 636.0L535.5 634.0L536.5 639.5L538.5 634.5L540.0 628.0L541.5 622.0L543.5 616.0L545.0 622.0L547.0 613.0L548.5 609.0L550.5 614.0L552.5 622.0L555.0 629.0L557.0 635.0L559.0 639.0L561.0 633.0L563.5 629.0L565.0 631.0L567.5 639.5L569.5 645.0L571.0 647.0L573.0 646.0L574.0 649.0L575.0 647.5L577.5 647.5L579.5 651.0L582.0 654.0L583.5 641.0L586.0 644.0L589.0 644.0L590.0 641.0L591.5 648.5L593.5 642.5L595.5 630.5L597.5 628.5L599.0 631.0L600.5 635.0L603.0 635.0L604.5 627.0L606.0 635.0L607.5 632.0L609.0 630.0L610.5 626.0L612.5 626.0L614.0 628.0L616.0 622.0L618.0 625.5L619.0 637.0L621.5 634.5L624.5 634.5L627.0 635.0L628.5 639.5L630.5 635.0L631.5 633.5L633.5 637.0L635.5 642.0L637.0 641.5L639.0 638.0L641.0 636.5L644.5 636.5L646.5 635.5L648.0 637.0L650.5 637.0L652.0 628.5L654.0 627.0L655.5 629.5L657.5 624.0L660.0 629.0L663.0 629.0L665.5 629.0L667.5 627.0L669.0 633.0L671.0 638.0L672.5 645.0L674.0 643.0L675.5 646.0L676.5 637.0L678.0 634.0L678.5 644.0L679.5 646.5L681.0 648.0L682.0 633.0L683.5 629.0L685.5 636.0L687.5 634.0L690.0 631.5L692.5 629.5L694.0 634.0L695.5 639.5L697.5 635.0L699.5 641.0L701.5 647.0L703.5 651.0L706.5 651.0L707.5 637.0L709.0 634.0L710.5 644.0L713.0 644.0L715.5 642.0L717.0 632.0L719.0 630.5L721.5 627.0L723.0 623.0L724.5 615.5L726.5 620.0L728.0 620.5L730.0 610.5L730.5 621.0L731.0 627.0L732.5 623.0L734.0 620.5L736.0 624.0L737.5 625.5L739.0 615.5L739.5 625.0L740.0 621.0L741.5 633.0L742.0 636.0L743.5 628.0L745.5 633.0L746.0 627.0L747.5 624.0L749.5 619.5L751.5 618.0L753.0 608.5L754.5 610.0L756.0 614.0L757.0 623.5L758.5 631.0L759.5 645.0L760.5 646.0L761.0 640.0L762.0 648.5L763.0 634.0L765.0 632.0L767.0 629.5L768.5 631.0L769.5 645.0L770.0 647.0L771.0 641.0L772.5 645.5L774.0 646.0L776.0 637.0L778.0 635.5L780.0 635.5L781.0 631.0L782.5 634.0L784.0 641.0L786.0 637.5L789.0 637.0L790.0 640.0L791.5 639.0L794.0 643.0L796.0 645.5L797.0 655.5L798.5 651.0L800.0 647.0L801.0 640.0L802.5 633.0L803.5 624.0L806.0 627.5L807.5 627.5L809.5 620.5L812.0 624.0L814.5 625.0L816.0 627.0L818.5 625.0L820.0 621.0L822.0 629.0L823.5 623.0L825.0 620.5L827.0 622.0L828.5 625.5L830.0 619.0L832.0 613.0L834.0 607.5L836.0 605.5L838.0 606.0L840.0 612.5L841.5 605.0L843.0 609.0L844.0 604.0L846.0 608.0L847.5 600.0L849.0 592.0L851.5 587.0L854.0 583.5L855.5 584.0L857.0 586.0L858.5 592.5L859.5 605.0L861.0 595.0L862.5 601.0L864.5 605.0L866.5 607.5L868.0 599.0L869.0 611.0L870.0 620.0L871.0 627.0L872.5 624.5L874.0 628.0L876.0 638.5L878.0 639.5L879.5 631.5L881.0 636.0L882.5 644.0L884.0 654.0L885.5 638.5L887.0 648.0L888.0 641.0L889.5 644.0L891.0 647.0L893.0 653.5L895.0 643.5L897.0 649.0L899.0 640.0L901.0 637.0L902.5 631.0L904.5 623.5L906.0 616.0L908.0 614.5L910.0 614.0L911.5 606.5L913.0 600.0L914.5 597.0L916.0 616.0L917.0 602.0L918.0 596.0L919.5 594.0L921.0 599.5L923.0 599.5L925.0 594.0L927.0 587.0L928.5 591.0L930.0 598.0L931.0 584.0L932.5 576.0L934.0 566.5L935.5 559.5L937.0 565.5L938.5 568.0L940.0 564.0L941.5 569.0L943.5 571.0L946.0 574.5L948.0 566.0L950.0 562.0L952.0 558.0L954.0 556.0L956.5 558.0L958.5 554.0L960.5 558.0L963.0 564.0L964.5 557.0L966.0 550.0L966.5 560.0L967.5 557.0L969.0 556.5L971.5 555.5L973.5 553.0L975.0 545.0L975.5 556.0L976.5 554.0L978.0 551.0L980.0 541.0L982.0 551.0L984.5 550.5L986.0 552.5L987.5 550.5L989.5 553.0L992.5 554.5L994.0 566.5L996.0 564.0L998.0 559.0L1000.0 557.5L1002.0 558.0L1004.0 565.0L1005.5 564.0L1007.5 566.5L1009.5 569.5L1011.5 566.5L1013.0 559.0L1014.0 549.5L1015.0 546.0L1017.0 548.5L1018.5 541.5L1020.0 538.0L1021.5 532.0L1023.0 533.0L1024.0 529.5L1025.5 532.0L1027.5 534.5L1029.5 533.0L1031.5 532.5L1033.0 527.5L1035.0 526.0L1037.5 522.0L1039.0 527.0L1041.0 533.0L1042.5 526.5L1044.0 525.0L1045.0 514.5L1047.0 516.0L1049.0 513.5L1050.5 514.0L1052.0 511.5L1054.0 518.5L1056.0 516.5L1057.5 518.5L1059.5 516.5L1060.5 506.5L1062.5 509.0L1065.0 511.5L1066.5 507.0L1068.0 503.5L1069.5 509.0L1071.0 514.5L1072.5 522.0L1073.5 532.5L1075.5 539.5L1077.5 533.0L1079.5 531.5L1081.5 535.0L1083.5 537.5L1085.5 532.5L1086.0 543.0L1086.5 551.5L1088.5 547.0L1091.5 543.0L1093.5 548.0L1095.5 551.5L1097.0 551.0L1098.5 547.5L1100.0 550.0L1101.5 555.5L1103.0 559.0L1104.5 564.5L1106.5 560.0L1108.0 562.0L1109.0 567.0L1110.5 560.0L1112.0 563.5L1114.0 569.5L1116.0 569.0L1118.0 573.5L1119.5 571.5L1121.0 569.5L1122.5 574.0L1124.5 573.5L1126.0 564.5L1128.0 558.0L1130.0 553.5L1132.0 555.0L1134.5 555.0L1136.0 560.5L1137.5 563.0L1139.0 567.0L1140.5 558.0L1142.0 558.5L1144.5 555.5L1146.0 557.5L1147.5 563.5L1149.0 562.5L1151.0 567.5L1153.0 574.0L1155.0 572.0L1157.0 569.5L1159.0 575.0L1160.5 570.0L1162.5 570.0L1164.5 574.0L1167.0 571.5L1169.0 568.5L1171.0 559.5L1172.0 558.5L1174.0 562.0L1176.0 571.5L1177.5 576.0L1180.0 578.0L1182.0 581.0L1184.0 584.5L1186.0 586.5L1188.0 581.5L1189.5 574.0L1191.5 573.5L1195.0 574.5L1198.0 574.5L1200.0 570.5L1201.5 574.5L1203.0 581.5L1205.0 580.5L1207.0 583.0L1208.5 584.0L1210.5 580.5L1212.0 577.5L1213.0 569.0L1214.0 578.0L1215.0 576.0L1217.0 577.0L1218.5 566.0L1220.0 569.0L1221.5 574.5L1223.0 567.0L1224.5 565.5L1226.5 560.0L1227.0 567.0L1228.0 571.0L1229.5 568.5L1230.0 558.0L1230.5 555.0L1231.0 558.0" stroke="#ff0000" stroke-width="2.15" fill="none" stroke-linejoin="miter" stroke-linecap="square"/>
<path d="M6.5 493.0V670.5H1235.5V493.0" fill="none" stroke="#f4f4f4" stroke-width="1.25"/>
<line x1="5.9" y1="493.0" x2="1236.1" y2="493.0" stroke="#d0d0d0" stroke-width="1.6"/>
<text transform="scale(0.72,1)" x="1279.44 1288.33" y="664.30" fill="#e4e4e4" text-anchor="middle" font-family="'Liberation Sans',sans-serif" font-size="13.6">01</text>
<text transform="scale(0.72,1)" x="58.61 67.50" y="680.60" fill="#e4e4e4" text-anchor="middle" font-family="'Liberation Sans',sans-serif" font-size="13.6">04</text>
<text transform="scale(0.72,1)" x="116.94 125.83" y="680.60" fill="#e4e4e4" text-anchor="middle" font-family="'Liberation Sans',sans-serif" font-size="13.6">05</text>
<text transform="scale(0.72,1)" x="162.78 171.67" y="680.60" fill="#e4e4e4" text-anchor="middle" font-family="'Liberation Sans',sans-serif" font-size="13.6">09</text>
<text transform="scale(0.72,1)" x="248.89 257.78" y="680.60" fill="#e4e4e4" text-anchor="middle" font-family="'Liberation Sans',sans-serif" font-size="13.6">10</text>
<text transform="scale(0.72,1)" x="333.61 342.50" y="680.60" fill="#e4e4e4" text-anchor="middle" font-family="'Liberation Sans',sans-serif" font-size="13.6">11</text>
<text transform="scale(0.72,1)" x="414.17 423.06" y="680.60" fill="#e4e4e4" text-anchor="middle" font-family="'Liberation Sans',sans-serif" font-size="13.6">12</text>
<text transform="scale(0.72,1)" x="496.11 505.00" y="680.60" fill="#e4e4e4" text-anchor="middle" font-family="'Liberation Sans',sans-serif" font-size="13.6">13</text>
<text transform="scale(0.72,1)" x="572.50 581.39" y="680.60" fill="#e4e4e4" text-anchor="middle" font-family="'Liberation Sans',sans-serif" font-size="13.6">14</text>
<text transform="scale(0.72,1)" x="672.50 681.39" y="680.60" fill="#e4e4e4" text-anchor="middle" font-family="'Liberation Sans',sans-serif" font-size="13.6">16</text>
<text transform="scale(0.72,1)" x="715.56 724.44" y="680.60" fill="#e4e4e4" text-anchor="middle" font-family="'Liberation Sans',sans-serif" font-size="13.6">17</text>
<text transform="scale(0.72,1)" x="797.50 806.39" y="680.60" fill="#e4e4e4" text-anchor="middle" font-family="'Liberation Sans',sans-serif" font-size="13.6">18</text>
<text transform="scale(0.72,1)" x="872.50 881.39" y="680.60" fill="#e4e4e4" text-anchor="middle" font-family="'Liberation Sans',sans-serif" font-size="13.6">19</text>
<text transform="scale(0.72,1)" x="950.28 959.17" y="680.60" fill="#e4e4e4" text-anchor="middle" font-family="'Liberation Sans',sans-serif" font-size="13.6">20</text>
<text transform="scale(0.72,1)" x="1028.06 1036.94" y="680.60" fill="#e4e4e4" text-anchor="middle" font-family="'Liberation Sans',sans-serif" font-size="13.6">21</text>
<text transform="scale(0.72,1)" x="1111.39 1120.28" y="680.60" fill="#e4e4e4" text-anchor="middle" font-family="'Liberation Sans',sans-serif" font-size="13.6">22</text>
<text transform="scale(0.72,1)" x="1194.72 1203.61" y="680.60" fill="#e4e4e4" text-anchor="middle" font-family="'Liberation Sans',sans-serif" font-size="13.6">23</text>
<text transform="scale(0.72,1)" x="1279.44 1288.33" y="680.60" fill="#e4e4e4" text-anchor="middle" font-family="'Liberation Sans',sans-serif" font-size="13.6">00</text>
<text transform="scale(0.72,1)" x="1364.17 1373.06" y="680.60" fill="#e4e4e4" text-anchor="middle" font-family="'Liberation Sans',sans-serif" font-size="13.6">01</text>
<text transform="scale(0.72,1)" x="1450.28 1459.17" y="680.60" fill="#e4e4e4" text-anchor="middle" font-family="'Liberation Sans',sans-serif" font-size="13.6">02</text>
<text transform="scale(0.72,1)" x="1533.61 1542.50" y="680.60" fill="#e4e4e4" text-anchor="middle" font-family="'Liberation Sans',sans-serif" font-size="13.6">03</text>
<text transform="scale(0.72,1)" x="1614.17 1623.06" y="680.60" fill="#e4e4e4" text-anchor="middle" font-family="'Liberation Sans',sans-serif" font-size="13.6">04</text>
<text transform="scale(0.72,1)" x="1685.00 1693.89" y="680.60" fill="#e4e4e4" text-anchor="middle" font-family="'Liberation Sans',sans-serif" font-size="13.6">05</text>
<text transform="scale(0.72,1)" x="120.28 129.17" y="680.60" fill="#e4e4e4" text-anchor="middle" font-family="'Liberation Sans',sans-serif" font-size="13.6">08</text>
<text transform="scale(0.72,1)" x="636.11 645.00" y="680.60" fill="#e4e4e4" text-anchor="middle" font-family="'Liberation Sans',sans-serif" font-size="13.6">15</text>
<text transform="scale(0.72,1)" x="1720.87 1729.55 1738.23 1746.91 1755.59" y="527.10" fill="#e4e4e4" text-anchor="middle" font-family="'Liberation Sans',sans-serif" font-size="13.6">1,875</text>
<text transform="scale(0.72,1)" x="1720.87 1729.55 1738.23 1746.91 1755.59" y="585.10" fill="#e4e4e4" text-anchor="middle" font-family="'Liberation Sans',sans-serif" font-size="13.6">1,850</text>
<text transform="scale(0.72,1)" x="1720.87 1729.55 1738.23 1746.91 1755.59" y="643.10" fill="#e4e4e4" text-anchor="middle" font-family="'Liberation Sans',sans-serif" font-size="13.6">1,825</text>
<rect x="1236" y="544.5" width="58.6" height="21.4" fill="#d4d4d4"/>
<rect x="1236" y="544.5" width="58.6" height="1.3" fill="#e6e6e6"/>
<rect x="1236" y="564.6" width="58.6" height="1.3" fill="#e2e2e2"/>
<text transform="scale(0.8,1)" x="1565.06 1573.19 1581.31 1589.44 1597.56" y="558.40" fill="#000" text-anchor="middle" font-family="'Liberation Sans',sans-serif" font-size="13.6" font-weight="bold">1,864</text>
</svg>
</body>
</html>
